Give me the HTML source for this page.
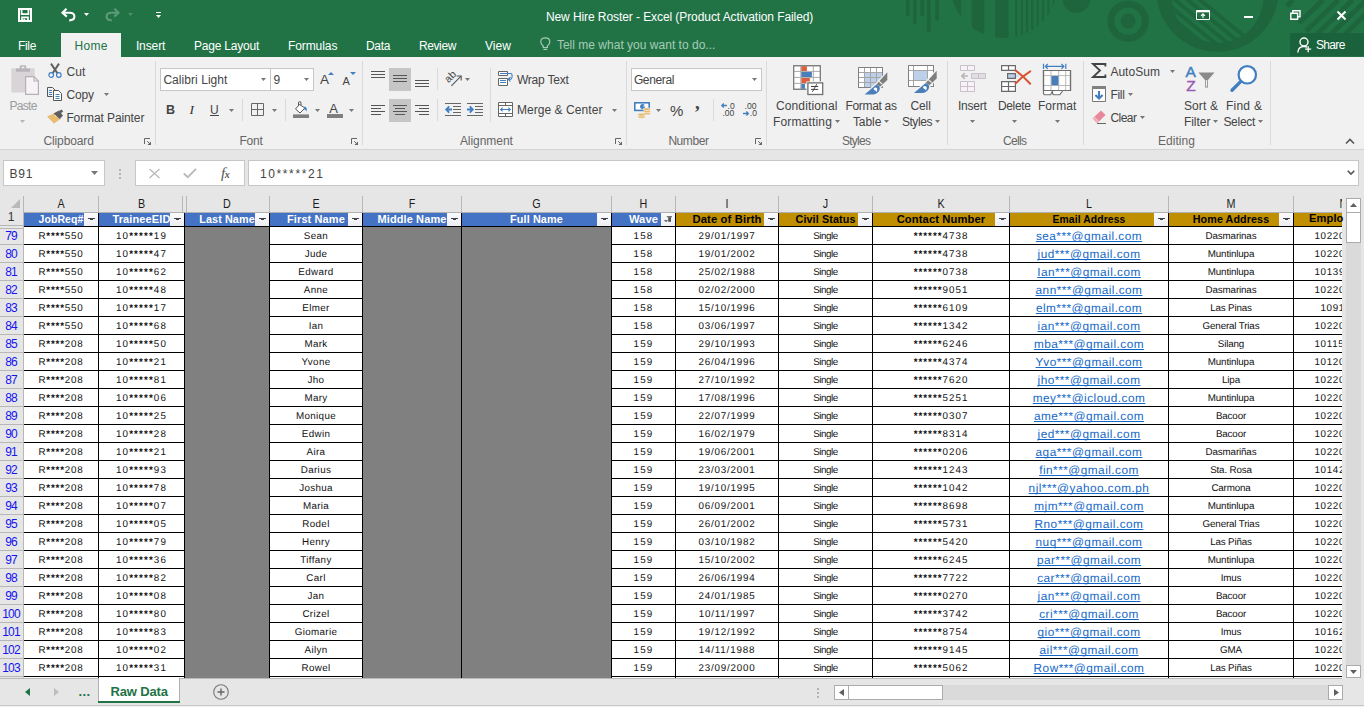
<!DOCTYPE html>
<html lang="en"><head><meta charset="utf-8"><title>New Hire Roster - Excel</title>
<style>
html,body{margin:0;padding:0}
body{width:1364px;height:707px;overflow:hidden;position:relative;background:#e6e6e6;font-family:"Liberation Sans",sans-serif;font-size:12px;color:#444}
.a{position:absolute;display:block}
.t{position:absolute;white-space:nowrap}
svg{overflow:visible}
</style></head><body>

<div class="a" style="left:0px;top:0px;width:1364px;height:57px;background:#217346;"></div>
<svg class="a" style="left:0;top:0;overflow:hidden" width="1364" height="57" viewBox="0 0 1364 57"><rect x="906" y="0" width="3.5" height="16" fill="#1e653d"/><rect x="913" y="0" width="3.7" height="23.6" fill="#1e653d"/><rect x="920.4" y="0" width="3.5" height="16" fill="#1e653d"/><rect x="927" y="0" width="3.6" height="32.4" fill="#1e653d"/><rect x="935.2" y="0" width="3.7" height="20.5" fill="#1e653d"/><clipPath id="hd"><circle cx="1004" cy="-15.8" r="53.8"/></clipPath><g clip-path="url(#hd)" fill="#1e653d"><rect x="940" y="0" width="21" height="40"/><rect x="971.7" y="0" width="12.7" height="40"/><rect x="995.1" y="0" width="13.4" height="40"/><rect x="1015.2" y="0" width="2.2" height="40"/><rect x="1020.8" y="0" width="2.2" height="40"/><rect x="1025.9" y="0" width="2.2" height="40"/><rect x="1031.2" y="0" width="2.2" height="40"/><rect x="1036.6" y="0" width="2.2" height="40"/><rect x="1041.9" y="0" width="2.2" height="40"/><rect x="1047.3" y="0" width="2.2" height="40"/><rect x="1052.6" y="0" width="2.2" height="40"/></g><circle cx="1076.4" cy="-1" r="13.7" fill="#1e653d"/><circle cx="1128.1" cy="21.1" r="17.2" fill="none" stroke="#1e653d" stroke-width="7"/><circle cx="1128.1" cy="21.1" r="7.5" fill="#1e653d"/><circle cx="1217.5" cy="-9.3" r="61.1" fill="#1e653d"/><circle cx="1217.7" cy="-2.9" r="45.8" fill="#217346"/><clipPath id="br"><circle cx="1217.7" cy="-2.9" r="45.8"/></clipPath><g clip-path="url(#br)" stroke="#1e653d" stroke-width="3.8"><path d="M1138.0 -10L1211.0 50"/><path d="M1150.5 -10L1223.5 50"/><path d="M1163.0 -10L1236.0 50"/><path d="M1175.5 -10L1248.5 50"/><path d="M1188.0 -10L1261.0 50"/></g><clipPath id="tr"><rect x="1284" y="0" width="80" height="33"/></clipPath><g clip-path="url(#tr)" stroke="#1e653d" stroke-width="4.8"><path d="M1293 0L1286.76 6"/><path d="M1323 0L1299.08 23"/><path d="M1338.4 0L1306.16 31"/><path d="M1352.5 0L1315.06 36"/><path d="M1366.5 0L1329.06 36"/><path d="M1380.5 0L1343.06 36"/></g></svg>
<svg class="a" style="left:18px;top:8px;" width="14" height="14" viewBox="0 0 14 14"><path d="M1 1H13V13H1Z" fill="none" stroke="#fff" stroke-width="2"/><path d="M3.6 1V6.2H10.4V1" fill="none" stroke="#fff" stroke-width="1.7"/><path d="M4 13V9.4H10V13" fill="none" stroke="#fff" stroke-width="1.7"/><rect x="5.4" y="10.6" width="1.8" height="2.4" fill="#fff"/></svg>
<svg class="a" style="left:61px;top:8px;" width="15" height="13" viewBox="0 0 15 13"><path d="M5.5 0.8L1.5 4.8L5.8 8.6M1.8 4.8H8.8Q13.4 4.8 13.4 8.6Q13.4 12.4 8.2 12.4" fill="none" stroke="#fff" stroke-width="2.1"/></svg>
<svg class="a" style="left:84px;top:13px;" width="5" height="3" viewBox="0 0 5 3"><path d="M0 0H5L2.5 3Z" fill="#fff"/></svg>
<svg class="a" style="left:104.5px;top:8px;" width="15" height="13" viewBox="0 0 15 13"><path d="M9.5 0.8L13.5 4.8L9.2 8.6M13.2 4.8H6.2Q1.6 4.8 1.6 8.6Q1.6 12.4 6.8 12.4" fill="none" stroke="#5c9a78" stroke-width="2.1"/></svg>
<svg class="a" style="left:128px;top:13px;" width="5" height="3" viewBox="0 0 5 3"><path d="M0 0H5L2.5 3Z" fill="#4f8f6c"/></svg>
<div class="a" style="left:156px;top:12px;width:5px;height:1px;background:#fff;"></div>
<svg class="a" style="left:156px;top:14.5px;" width="5" height="3" viewBox="0 0 5 3"><path d="M0 0H5L2.5 3Z" fill="#fff"/></svg>
<div class="t" style="left:545.9px;top:8.84px;font-size:12px;line-height:16px;color:#fff;letter-spacing:-0.079px;">New Hire Roster - Excel (Product Activation Failed)</div>
<div class="a" style="left:61px;top:33px;width:60px;height:24px;background:#f1f1f1;"></div>
<div class="t" style="left:17.9px;top:37.84px;font-size:12px;line-height:16px;color:#fff;letter-spacing:-0.279px;">File</div>
<div class="t" style="left:74.4px;top:37.84px;font-size:12px;line-height:16px;color:#217346;letter-spacing:0.33px;">Home</div>
<div class="t" style="left:135.9px;top:37.84px;font-size:12px;line-height:16px;color:#fff;letter-spacing:-0.102px;">Insert</div>
<div class="t" style="left:193.9px;top:37.84px;font-size:12px;line-height:16px;color:#fff;letter-spacing:-0.189px;">Page Layout</div>
<div class="t" style="left:287.9px;top:37.84px;font-size:12px;line-height:16px;color:#fff;letter-spacing:-0.073px;">Formulas</div>
<div class="t" style="left:365.9px;top:37.84px;font-size:12px;line-height:16px;color:#fff;letter-spacing:-0.283px;">Data</div>
<div class="t" style="left:418.9px;top:37.84px;font-size:12px;line-height:16px;color:#fff;letter-spacing:-0.369px;">Review</div>
<div class="t" style="left:484.9px;top:37.84px;font-size:12px;line-height:16px;color:#fff;letter-spacing:0.069px;">View</div>
<svg class="a" style="left:540px;top:37px;" width="11" height="14" viewBox="0 0 11 14"><path d="M3.2 10.5V9Q0.8 7.2 0.8 4.8Q0.8 0.8 5.3 0.8Q9.8 0.8 9.8 4.8Q9.8 7.2 7.4 9V10.5ZM3.4 12.3H7.2" fill="none" stroke="#a8cbb7" stroke-width="1.2"/></svg>
<div class="t" style="left:556.9px;top:36.84px;font-size:12px;line-height:16px;color:#a8cbb7;letter-spacing:0.014px;">Tell me what you want to do...</div>
<svg class="a" style="left:1196px;top:10px;" width="14" height="10" viewBox="0 0 14 10"><path d="M0.5 0.5H13.5V9.5H0.5Z" fill="none" stroke="#fff"/><path d="M0 1.5H14" stroke="#fff" stroke-width="1.6"/><path d="M7 8V4M5 5.8L7 3.8L9 5.8" fill="none" stroke="#fff" stroke-width="1.1"/></svg>
<div class="a" style="left:1244px;top:16px;width:9px;height:2px;background:#fff;"></div>
<svg class="a" style="left:1290px;top:10px;" width="11" height="10" viewBox="0 0 11 10"><path d="M0.8 3.2H7.6V9.2H0.8Z" fill="none" stroke="#fff" stroke-width="1.4"/><path d="M2.8 3V0.8H10V6.8H7.8" fill="none" stroke="#fff" stroke-width="1.4"/></svg>
<svg class="a" style="left:1336.5px;top:10.5px;" width="9" height="9" viewBox="0 0 9 9"><path d="M0.5 0.5L8.5 8.5M8.5 0.5L0.5 8.5" stroke="#fff" stroke-width="2"/></svg>
<div class="a" style="left:1290px;top:33px;width:74px;height:23px;background:#1a623b;"></div>
<svg class="a" style="left:1297px;top:37px;" width="16" height="16" viewBox="0 0 16 16"><circle cx="7" cy="5" r="4" fill="none" stroke="#fff" stroke-width="1.4"/><path d="M0.8 15.5Q1.2 9.5 7 9.5Q9 9.5 10.2 10.2" fill="none" stroke="#fff" stroke-width="1.4"/><path d="M11.2 9.2V15.2M8.2 12.2H14.2" stroke="#fff" stroke-width="1.3"/></svg>
<div class="t" style="left:1315.9px;top:36.84px;font-size:12px;line-height:16px;color:#fff;letter-spacing:-0.63px;">Share</div>
<div class="a" style="left:0px;top:57px;width:1364px;height:92px;background:#f1f1f1;"></div>
<div class="a" style="left:0px;top:149px;width:1364px;height:1px;background:#d4d4d4;"></div>
<div class="a" style="left:155px;top:61px;width:1px;height:84px;background:#dadada;"></div>
<div class="a" style="left:362px;top:61px;width:1px;height:84px;background:#dadada;"></div>
<div class="a" style="left:626px;top:61px;width:1px;height:84px;background:#dadada;"></div>
<div class="a" style="left:766px;top:61px;width:1px;height:84px;background:#dadada;"></div>
<div class="a" style="left:947px;top:61px;width:1px;height:84px;background:#dadada;"></div>
<div class="a" style="left:1083px;top:61px;width:1px;height:84px;background:#dadada;"></div>
<div class="a" style="left:1270px;top:61px;width:1px;height:84px;background:#dadada;"></div>
<svg class="a" style="left:144px;top:138px;" width="8" height="8" viewBox="0 0 8 8"><path d="M0.5 6V0.5H6" fill="none" stroke="#666" stroke-width="1"/><path d="M3.2 3.2L5.5 5.5" fill="none" stroke="#666" stroke-width="1"/><path d="M7 3.4V7H3.4Z" fill="#666"/></svg>
<svg class="a" style="left:351px;top:138px;" width="8" height="8" viewBox="0 0 8 8"><path d="M0.5 6V0.5H6" fill="none" stroke="#666" stroke-width="1"/><path d="M3.2 3.2L5.5 5.5" fill="none" stroke="#666" stroke-width="1"/><path d="M7 3.4V7H3.4Z" fill="#666"/></svg>
<svg class="a" style="left:615px;top:138px;" width="8" height="8" viewBox="0 0 8 8"><path d="M0.5 6V0.5H6" fill="none" stroke="#666" stroke-width="1"/><path d="M3.2 3.2L5.5 5.5" fill="none" stroke="#666" stroke-width="1"/><path d="M7 3.4V7H3.4Z" fill="#666"/></svg>
<svg class="a" style="left:755px;top:138px;" width="8" height="8" viewBox="0 0 8 8"><path d="M0.5 6V0.5H6" fill="none" stroke="#666" stroke-width="1"/><path d="M3.2 3.2L5.5 5.5" fill="none" stroke="#666" stroke-width="1"/><path d="M7 3.4V7H3.4Z" fill="#666"/></svg>
<div class="t" style="left:43.4px;top:132.84px;font-size:12px;line-height:16px;color:#666;letter-spacing:-0.108px;">Clipboard</div>
<div class="t" style="left:239.4px;top:132.84px;font-size:12px;line-height:16px;color:#666;letter-spacing:-0.171px;">Font</div>
<div class="t" style="left:459.9px;top:132.84px;font-size:12px;line-height:16px;color:#666;letter-spacing:-0.045px;">Alignment</div>
<div class="t" style="left:668.4px;top:132.84px;font-size:12px;line-height:16px;color:#666;letter-spacing:-0.436px;">Number</div>
<div class="t" style="left:841.9px;top:132.84px;font-size:12px;line-height:16px;color:#666;letter-spacing:-0.736px;">Styles</div>
<div class="t" style="left:1002.9px;top:132.84px;font-size:12px;line-height:16px;color:#666;letter-spacing:-0.668px;">Cells</div>
<div class="t" style="left:1157.9px;top:132.84px;font-size:12px;line-height:16px;color:#666;letter-spacing:0.051px;">Editing</div>
<svg class="a" style="left:1345px;top:138px;" width="10" height="6" viewBox="0 0 10 6"><path d="M1 5.5L5 1.5L9 5.5" fill="none" stroke="#555" stroke-width="1.6"/></svg>
<svg class="a" style="left:11px;top:65px;" width="28" height="30" viewBox="0 0 28 30"><rect x="0.3" y="3.3" width="23.4" height="24.2" rx="1.2" fill="#d8d4d8"/>
<path d="M5 3.4H8.8V1.6Q8.8 0.3 10 0.3H14Q15.2 0.3 15.2 1.6V3.4H19V6.8H5Z" fill="#b9b4b9"/>
<rect x="10.6" y="1.6" width="2.8" height="1.7" fill="#efedef"/>
<path d="M14.6 11.6H23L27.4 16V29.4H14.6Z" fill="#f6f2f6" stroke="#b5b0b5" stroke-width="1.2"/><path d="M23 11.6V16H27.4" fill="none" stroke="#b5b0b5" stroke-width="1.1"/></svg>
<div class="t" style="left:9.4px;top:97.84px;font-size:12px;line-height:16px;color:#9b9b9b;letter-spacing:-0.671px;">Paste</div>
<svg class="a" style="left:20px;top:120px;" width="5" height="3" viewBox="0 0 5 3"><path d="M0 0H5L2.5 3Z" fill="#b5b5b5"/></svg>
<svg class="a" style="left:48px;top:63px;" width="14" height="15" viewBox="0 0 14 15"><path d="M3 0.6L9.4 10.2M11 0.6L4.6 10.2" stroke="#606060" stroke-width="2" fill="none"/>
<circle cx="3.2" cy="12" r="2.3" fill="none" stroke="#417fc1" stroke-width="1.2"/><circle cx="10.8" cy="12" r="2.3" fill="none" stroke="#417fc1" stroke-width="1.2"/></svg>
<div class="t" style="left:66.4px;top:63.84px;font-size:12px;line-height:16px;color:#444;letter-spacing:0.163px;">Cut</div>
<svg class="a" style="left:47px;top:87px;" width="15" height="14" viewBox="0 0 15 14"><path d="M0.5 0.5H5.5L8 3V3.5M0.5 0.5V9.5H5.5" fill="none" stroke="#555"/>
<path d="M6.5 3.5H11.5L14.5 6.5V13.5H6.5Z" fill="#fff" stroke="#555"/>
<path d="M2 3.5H5M2 5.5H5M2 7.5H5M8.5 7.5H12.5M8.5 9.5H12.5M8.5 11.5H12.5" stroke="#417fc1"/></svg>
<div class="t" style="left:66.4px;top:86.84px;font-size:12px;line-height:16px;color:#444;letter-spacing:-0.171px;">Copy</div>
<svg class="a" style="left:104px;top:93px;" width="5" height="3" viewBox="0 0 5 3"><path d="M0 0H5L2.5 3Z" fill="#777"/></svg>
<svg class="a" style="left:47px;top:109px;" width="17" height="15" viewBox="0 0 17 15"><path d="M0.1 7.4L8 4L13.4 9.9L7 14.4Z" fill="#e8bb6e"/>
<path d="M6.5 4.5L12 1.5L15.9 6.4L12.9 9.9Z" fill="#5e5e5e"/><path d="M7.6 5.8L9.4 8" stroke="#f1f1f1" stroke-width="0.8"/><path d="M12 2L14.6 0.4L16.2 2.4L13.4 4.4Z" fill="#5e5e5e"/></svg>
<div class="t" style="left:66.4px;top:109.84px;font-size:12px;line-height:16px;color:#444;letter-spacing:-0.105px;">Format Painter</div>
<div class="a" style="left:160px;top:68px;width:154px;height:23px;background:#fff;box-sizing:border-box;border:1px solid #c6c6c6;"></div>
<div class="a" style="left:270px;top:69px;width:1px;height:21px;background:#c6c6c6;"></div>
<div class="t" style="left:163.4px;top:71.84px;font-size:12px;line-height:16px;color:#444;letter-spacing:0.053px;">Calibri Light</div>
<svg class="a" style="left:261px;top:78px;" width="5" height="3" viewBox="0 0 5 3"><path d="M0 0H5L2.5 3Z" fill="#777"/></svg>
<div class="t" style="left:273.4px;top:71.84px;font-size:12px;line-height:16px;color:#444;">9</div>
<svg class="a" style="left:304px;top:78px;" width="5" height="3" viewBox="0 0 5 3"><path d="M0 0H5L2.5 3Z" fill="#777"/></svg>
<div class="t" style="left:320px;top:70.32px;font-size:13.5px;line-height:20px;color:#444;">A</div>
<svg class="a" style="left:328px;top:72px;" width="6" height="3" viewBox="0 0 6 3"><path d="M0 3H6L3 0Z" fill="#417fc1"/></svg>
<div class="t" style="left:342.6px;top:73.19px;font-size:11px;line-height:16px;color:#444;">A</div>
<svg class="a" style="left:349.5px;top:72px;" width="6" height="3" viewBox="0 0 6 3"><path d="M0 0H6L3 3Z" fill="#417fc1"/></svg>
<div class="t" style="left:166px;top:101.67px;font-size:12.5px;line-height:16px;color:#444;font-weight:bold;">B</div>
<div class="t" style="left:189.5px;top:100px;font-family:'Liberation Serif',serif;font-style:italic;font-size:13.5px;line-height:20px;color:#333">I</div>
<div class="t" style="left:210px;top:102.04px;font-size:12px;line-height:16px;color:#444;">U</div>
<div class="a" style="left:210px;top:115px;width:9px;height:1px;background:#444;"></div>
<svg class="a" style="left:229px;top:109px;" width="5" height="3" viewBox="0 0 5 3"><path d="M0 0H5L2.5 3Z" fill="#777"/></svg>
<div class="a" style="left:242px;top:99px;width:1px;height:22px;background:#dadada;"></div>
<svg class="a" style="left:251px;top:103px;" width="13" height="13" viewBox="0 0 13 13"><path d="M0.5 0.5H12.5V12.5H0.5ZM6.5 0.5V12.5M0.5 6.5H12.5" fill="none" stroke="#666"/></svg>
<svg class="a" style="left:272px;top:109px;" width="5" height="3" viewBox="0 0 5 3"><path d="M0 0H5L2.5 3Z" fill="#777"/></svg>
<div class="a" style="left:285px;top:99px;width:1px;height:22px;background:#dadada;"></div>
<svg class="a" style="left:293px;top:101px;" width="17" height="17" viewBox="0 0 17 17"><rect x="0" y="13.4" width="16" height="3.6" fill="#7f7f7f"/>
<path d="M6.5 3.5L2.5 8L7 12L12 7Z" fill="#fff" stroke="#555" stroke-width="1"/>
<path d="M5.5 5V2Q5.5 0.6 6.8 0.6Q8 0.6 8 2V4" fill="none" stroke="#555"/>
<path d="M11.5 5.5Q14.5 6 13.6 10.6Q12 8 10.4 8.4Z" fill="#417fc1"/></svg>
<svg class="a" style="left:315px;top:109px;" width="5" height="3" viewBox="0 0 5 3"><path d="M0 0H5L2.5 3Z" fill="#777"/></svg>
<div class="t" style="left:329.3px;top:100.80px;font-size:13px;line-height:16px;color:#444;">A</div>
<div class="a" style="left:327px;top:114.4px;width:16px;height:3.6px;background:#7f7f7f;"></div>
<svg class="a" style="left:349px;top:109px;" width="5" height="3" viewBox="0 0 5 3"><path d="M0 0H5L2.5 3Z" fill="#777"/></svg>
<div class="a" style="left:371px;top:71px;width:14px;height:1px;background:#555;"></div>
<div class="a" style="left:371px;top:74px;width:14px;height:1px;background:#555;"></div>
<div class="a" style="left:371px;top:77px;width:14px;height:1px;background:#555;"></div>
<div class="a" style="left:389px;top:68px;width:22px;height:23px;background:#c6c6c6;"></div>
<div class="a" style="left:393px;top:75px;width:14px;height:1px;background:#555;"></div>
<div class="a" style="left:393px;top:78px;width:14px;height:1px;background:#555;"></div>
<div class="a" style="left:393px;top:81px;width:14px;height:1px;background:#555;"></div>
<div class="a" style="left:415px;top:80px;width:14px;height:1px;background:#555;"></div>
<div class="a" style="left:415px;top:83px;width:14px;height:1px;background:#555;"></div>
<div class="a" style="left:415px;top:86px;width:14px;height:1px;background:#555;"></div>
<div class="a" style="left:437px;top:68px;width:1px;height:22px;background:#dadada;"></div>
<svg class="a" style="left:444px;top:70px;" width="19" height="17" viewBox="0 0 19 17"><path d="M7.4 15.8L17 6.2" stroke="#555" stroke-width="1.1" fill="none"/><path d="M12.6 6H17.2V10.6" fill="none" stroke="#555" stroke-width="1.1"/>
<text x="0" y="0" font-size="10.5" fill="#444" font-family="Liberation Sans, sans-serif" transform="translate(4.6 13.2) rotate(-45)">ab</text></svg>
<svg class="a" style="left:465px;top:78px;" width="5" height="3" viewBox="0 0 5 3"><path d="M0 0H5L2.5 3Z" fill="#777"/></svg>
<div class="a" style="left:490px;top:68px;width:1px;height:54px;background:#dadada;"></div>
<svg class="a" style="left:498px;top:71px;" width="16" height="16" viewBox="0 0 16 16"><path d="M0.5 0.5H9.5V4.5H0.5ZM0.5 7.5H9.5V14.5H0.5Z" fill="#fff" stroke="#666"/>
<path d="M2 2.5H13.5M2 9.5H8M2 11.5H8" stroke="#417fc1" fill="none"/><path d="M13.5 2.5Q15 6 13 8.2H10.5M12.4 6.2L10.2 8.3L12.4 10.4" fill="none" stroke="#417fc1" stroke-width="1.1"/></svg>
<div class="t" style="left:516.9px;top:71.84px;font-size:12px;line-height:16px;color:#444;letter-spacing:-0.197px;">Wrap Text</div>
<div class="a" style="left:371px;top:105px;width:14px;height:1px;background:#555;"></div>
<div class="a" style="left:371px;top:108px;width:10px;height:1px;background:#555;"></div>
<div class="a" style="left:371px;top:111px;width:14px;height:1px;background:#555;"></div>
<div class="a" style="left:371px;top:114px;width:10px;height:1px;background:#555;"></div>
<div class="a" style="left:389px;top:99px;width:22px;height:23px;background:#c6c6c6;"></div>
<div class="a" style="left:393px;top:105px;width:14px;height:1px;background:#555;"></div>
<div class="a" style="left:395px;top:108px;width:10px;height:1px;background:#555;"></div>
<div class="a" style="left:393px;top:111px;width:14px;height:1px;background:#555;"></div>
<div class="a" style="left:395px;top:114px;width:10px;height:1px;background:#555;"></div>
<div class="a" style="left:415px;top:105px;width:14px;height:1px;background:#555;"></div>
<div class="a" style="left:419px;top:108px;width:10px;height:1px;background:#555;"></div>
<div class="a" style="left:415px;top:111px;width:14px;height:1px;background:#555;"></div>
<div class="a" style="left:419px;top:114px;width:10px;height:1px;background:#555;"></div>
<div class="a" style="left:437px;top:99px;width:1px;height:22px;background:#dadada;"></div>
<svg class="a" style="left:445px;top:103px;" width="16" height="13" viewBox="0 0 16 13"><path d="M0 0.5H16M8 3.5H16M8 6.5H16M8 9.5H16M0 12.5H16" stroke="#666"/>
<path d="M7 6.5H1.4M4.2 3.4L1.2 6.5L4.2 9.6" fill="none" stroke="#417fc1" stroke-width="1.8"/></svg>
<svg class="a" style="left:467px;top:103px;" width="16" height="13" viewBox="0 0 16 13"><path d="M0 0.5H16M8 3.5H16M8 6.5H16M8 9.5H16M0 12.5H16" stroke="#666"/>
<path d="M0 6.5H5.6M2.8 3.4L5.8 6.5L2.8 9.6" fill="none" stroke="#417fc1" stroke-width="1.8"/></svg>
<svg class="a" style="left:498px;top:102px;" width="15" height="15" viewBox="0 0 15 15"><path d="M0.5 0.5H14.5V14.5H0.5Z" fill="#fff" stroke="#666" stroke-width="1"/><path d="M0.5 3.5H14.5M0.5 11.5H14.5M7.5 0.5V3.5M7.5 11.5V14.5" fill="none" stroke="#666" stroke-width="1"/>
<path d="M3 7.5H12M4.6 5.6L2.7 7.5L4.6 9.4M10.4 5.6L12.3 7.5L10.4 9.4" fill="none" stroke="#417fc1" stroke-width="1.1"/></svg>
<div class="t" style="left:516.9px;top:102.34px;font-size:12px;line-height:16px;color:#444;letter-spacing:0.061px;">Merge &amp; Center</div>
<svg class="a" style="left:612px;top:109px;" width="5" height="3" viewBox="0 0 5 3"><path d="M0 0H5L2.5 3Z" fill="#777"/></svg>
<div class="a" style="left:631px;top:68px;width:131px;height:23px;background:#fff;box-sizing:border-box;border:1px solid #c6c6c6;"></div>
<div class="t" style="left:633.9px;top:71.84px;font-size:12px;line-height:16px;color:#444;letter-spacing:-0.365px;">General</div>
<svg class="a" style="left:752px;top:78px;" width="5" height="3" viewBox="0 0 5 3"><path d="M0 0H5L2.5 3Z" fill="#777"/></svg>
<svg class="a" style="left:634px;top:102px;" width="17" height="17" viewBox="0 0 17 17"><rect x="0" y="0" width="16" height="9.2" fill="#417fc1"/><rect x="1.6" y="1.6" width="12.8" height="6" fill="#fff"/>
<circle cx="8.6" cy="4.6" r="2.5" fill="#417fc1"/><path d="M8.6 4.6H11.2V2.8Z" fill="#fff"/>
<g fill="#e8b868" stroke="#f1f1f1" stroke-width="0.7"><ellipse cx="12.9" cy="11.4" rx="3.5" ry="1.5"/><ellipse cx="12.9" cy="9.3" rx="3.5" ry="1.5"/><ellipse cx="12.9" cy="7.2" rx="3.5" ry="1.5"/>
<ellipse cx="7.6" cy="14.8" rx="3.7" ry="1.5"/><ellipse cx="7.6" cy="12.6" rx="3.7" ry="1.5"/></g></svg>
<svg class="a" style="left:656px;top:109px;" width="5" height="3" viewBox="0 0 5 3"><path d="M0 0H5L2.5 3Z" fill="#777"/></svg>
<div class="t" style="left:670px;top:100.80px;font-size:15px;line-height:20px;color:#444;">%</div>
<div class="t" style="left:695.1px;top:92.62px;font-size:19px;line-height:20px;color:#444;font-weight:bold;font-family:'Liberation Serif',serif;">,</div>
<div class="a" style="left:713px;top:99px;width:1px;height:22px;background:#dadada;"></div>
<svg class="a" style="left:721px;top:103px;" width="15" height="14" viewBox="0 0 15 14"><path d="M6 2.5H0.8M2.8 0.5L0.8 2.5L2.8 4.5" fill="none" stroke="#417fc1" stroke-width="1.3"/>
<text x="6.6" y="6.2" font-size="8.6" fill="#444" font-family="Liberation Sans, sans-serif">.0</text>
<text x="1.4" y="13.4" font-size="8.6" fill="#444" font-family="Liberation Sans, sans-serif">.00</text></svg>
<svg class="a" style="left:743px;top:103px;" width="15" height="14" viewBox="0 0 15 14"><text x="1.6" y="6.2" font-size="8.6" fill="#444" font-family="Liberation Sans, sans-serif">.00</text>
<path d="M0 10.5H5.4M3.4 8.5L5.4 10.5L3.4 12.5" fill="none" stroke="#417fc1" stroke-width="1.3"/>
<text x="6.8" y="13.4" font-size="8.6" fill="#444" font-family="Liberation Sans, sans-serif">.0</text></svg>
<svg class="a" style="left:793px;top:65px;" width="31" height="31" viewBox="0 0 31 31"><path d="M0.6 0.6H27.4V24.4H0.6Z" fill="#fff" stroke="#808080" stroke-width="1.2"/>
<path d="M7.8 0.5V24.5M20.3 0.5V24.5M0.5 6.4H27.5M0.5 12.4H27.5M0.5 18.4H27.5" stroke="#a9a9a9" fill="none"/>
<rect x="8.3" y="1.2" width="5.6" height="4.8" fill="#dc5f3f"/><rect x="8.3" y="7" width="10.6" height="5" fill="#4a7ebb"/><rect x="8.3" y="13" width="8.6" height="5" fill="#dc5f3f"/><rect x="8.3" y="19" width="3.6" height="4.8" fill="#4a7ebb"/>
<path d="M0.6 0.6H27.4V24.4H0.6Z" fill="none" stroke="#808080" stroke-width="1.2"/>
<rect x="13.4" y="16.4" width="18" height="15" fill="#f1f1f1"/>
<rect x="14.9" y="17.9" width="14.8" height="11.6" fill="#fff" stroke="#707070" stroke-width="1.3"/>
<path d="M18 21.5H25.2M18 24.4H25.2M23.8 19.2L19.4 26.8" stroke="#444" stroke-width="1" fill="none"/></svg>
<div class="t" style="left:775.9px;top:97.84px;font-size:12px;line-height:16px;color:#444;letter-spacing:0.146px;">Conditional</div>
<div class="t" style="left:772.9px;top:113.84px;font-size:12px;line-height:16px;color:#444;letter-spacing:0.183px;">Formatting</div>
<svg class="a" style="left:835px;top:120px;" width="5" height="3" viewBox="0 0 5 3"><path d="M0 0H5L2.5 3Z" fill="#777"/></svg>
<svg class="a" style="left:858px;top:67px;" width="30" height="28" viewBox="0 0 30 28"><path d="M0.5 0.5H24.5V20.5H0.5Z" fill="#fff" stroke="#808080"/>
<rect x="6.5" y="5.5" width="18" height="15" fill="#bdd0e9"/>
<path d="M6.5 0.5V20.5M12.5 0.5V20.5M18.5 0.5V20.5M0.5 5.5H24.5M0.5 10.5H24.5M0.5 15.5H24.5" stroke="#a6a6a6" fill="none"/>
<path d="M0.5 0.5H24.5V20.5H0.5Z" fill="none" stroke="#808080"/><g transform="translate(0 0)"><path d="M29.3 5.3V13L22 19.8L18.5 17.2ZM18.4 17.4L6.6 27.5H15.5Q21.2 26.2 21.9 21.2Q21.7 19.2 20 18.4Z" fill="#f1f1f1" stroke="#f1f1f1" stroke-width="2.6" stroke-linejoin="round"/><path d="M29.3 5.3V13L22 19.8L18.5 17.2Z" fill="#7d7d7d"/><path d="M20 13.4L24.2 17" stroke="#f1f1f1" stroke-width="1.1"/>
<path d="M18.4 17.4L6.6 27.5H15.5Q21.2 26.2 21.9 21.2Q21.7 19.2 20 18.4Z" fill="#4a7ebb"/><path d="M15.5 21.4Q17.5 19.8 19.2 21.4Q19.6 23.4 18.4 25L17.6 23.4L16.6 23.6Z" fill="#fff"/></g></svg>
<div class="t" style="left:845.4px;top:97.84px;font-size:12px;line-height:16px;color:#444;letter-spacing:-0.314px;">Format as</div>
<div class="t" style="left:852.9px;top:113.84px;font-size:12px;line-height:16px;color:#444;letter-spacing:-0.047px;">Table</div>
<svg class="a" style="left:884px;top:120px;" width="5" height="3" viewBox="0 0 5 3"><path d="M0 0H5L2.5 3Z" fill="#777"/></svg>
<svg class="a" style="left:908px;top:65px;" width="30" height="30" viewBox="0 0 30 30"><path d="M0.5 0.5H25.5V21.5H0.5Z" fill="#fff" stroke="#808080"/>
<rect x="5.5" y="5.5" width="14" height="10" fill="#bdd0e9"/>
<path d="M5.5 0.5V21.5M19.5 0.5V21.5M0.5 5.5H25.5M0.5 15.5H25.5" stroke="#a6a6a6" fill="none"/>
<path d="M0.5 0.5H25.5V21.5H0.5Z" fill="none" stroke="#808080"/><g transform="translate(-0.6 0.5)"><path d="M29.3 5.3V13L22 19.8L18.5 17.2ZM18.4 17.4L6.6 27.5H15.5Q21.2 26.2 21.9 21.2Q21.7 19.2 20 18.4Z" fill="#f1f1f1" stroke="#f1f1f1" stroke-width="2.6" stroke-linejoin="round"/><path d="M29.3 5.3V13L22 19.8L18.5 17.2Z" fill="#7d7d7d"/><path d="M20 13.4L24.2 17" stroke="#f1f1f1" stroke-width="1.1"/>
<path d="M18.4 17.4L6.6 27.5H15.5Q21.2 26.2 21.9 21.2Q21.7 19.2 20 18.4Z" fill="#4a7ebb"/><path d="M15.5 21.4Q17.5 19.8 19.2 21.4Q19.6 23.4 18.4 25L17.6 23.4L16.6 23.6Z" fill="#fff"/></g></svg>
<div class="t" style="left:910.4px;top:97.84px;font-size:12px;line-height:16px;color:#444;letter-spacing:-0.057px;">Cell</div>
<div class="t" style="left:901.9px;top:113.84px;font-size:12px;line-height:16px;color:#444;letter-spacing:-0.436px;">Styles</div>
<svg class="a" style="left:934.5px;top:120px;" width="5" height="3" viewBox="0 0 5 3"><path d="M0 0H5L2.5 3Z" fill="#777"/></svg>
<svg class="a" style="left:960px;top:65px;" width="27" height="27" viewBox="0 0 27 27"><path d="M0.5 0.5H14.5V5.5H0.5ZM7.5 0.5V5.5" fill="#f8f2f8" stroke="#c9c1c9"/>
<path d="M11.5 8.5H25.5V13.5H11.5ZM18.5 8.5V13.5" fill="#e2dde2" stroke="#c9c1c9"/>
<path d="M0.5 16.5H14.5V26.5H0.5ZM7.5 16.5V26.5M0.5 21.5H14.5" fill="#f8f2f8" stroke="#c9c1c9"/>
<path d="M8 11H2M4.8 8.2L1.8 11L4.8 13.8" fill="none" stroke="#b9b5b9" stroke-width="1.6"/></svg>
<div class="t" style="left:957.9px;top:97.84px;font-size:12px;line-height:16px;color:#444;letter-spacing:-0.202px;">Insert</div>
<svg class="a" style="left:970px;top:120px;" width="5" height="3" viewBox="0 0 5 3"><path d="M0 0H5L2.5 3Z" fill="#777"/></svg>
<svg class="a" style="left:1001px;top:65px;" width="31" height="27" viewBox="0 0 31 27"><path d="M0.6 0.6H14.4V5.4H0.6ZM7.5 0.5V5.5" fill="#fff" stroke="#6a6a6a" stroke-width="1.2"/>
<path d="M14 8.5L18.5 11L14 13.5Z" fill="#cfe0f3"/><path d="M6.6 8.6H14.4V13.4H6.6Z" fill="#bdd0e9" stroke="#6a6a6a" stroke-width="1.2"/>
<path d="M0.6 16.6H14.4V26.4H0.6ZM7.5 16.5V26.5M0.5 21.5H14.5" fill="#fff" stroke="#6a6a6a" stroke-width="1.2"/>
<path d="M14.8 5.6Q22 11 29.2 18.8M29.2 6.4Q21 11.5 14.8 18.4" stroke="#d65532" stroke-width="2" fill="none" stroke-linecap="round"/></svg>
<div class="t" style="left:997.9px;top:97.84px;font-size:12px;line-height:16px;color:#444;letter-spacing:-0.338px;">Delete</div>
<svg class="a" style="left:1012px;top:120px;" width="5" height="3" viewBox="0 0 5 3"><path d="M0 0H5L2.5 3Z" fill="#777"/></svg>
<svg class="a" style="left:1042px;top:63px;" width="31" height="33" viewBox="0 0 31 33"><path d="M1.5 0.8V6M23.8 0.8V6" stroke="#417fc1" stroke-width="1.2" fill="none"/><path d="M3.4 3.4H21.8M5.8 1L3.3 3.4L5.8 5.8M19.4 1L21.9 3.4L19.4 5.8" fill="none" stroke="#417fc1" stroke-width="1.2"/>
<path d="M1.5 27.7V30.5Q1.8 31.7 3 31.7H8.6L10.4 28.2M10.6 28V30.5Q10.9 31.7 12.1 31.7H17.8L20.6 28" fill="#fff" stroke="#707070" stroke-width="1.1"/>
<path d="M1.5 7.5H28.5V27.5H1.5Z" fill="#fff" stroke="#707070" stroke-width="1.2"/>
<path d="M9 7.5V27.5M16.7 7.5V27.5M23.7 7.5V27.5M1.5 12.6H28.5M1.5 22.5H28.5" stroke="#b9b9b9" fill="none"/>
<rect x="9.4" y="13" width="7" height="9.2" fill="#4a7ebb"/>
<path d="M1.5 7.5H28.5V27.5H1.5Z" fill="none" stroke="#707070" stroke-width="1.2"/></svg>
<div class="t" style="left:1037.9px;top:97.84px;font-size:12px;line-height:16px;color:#444;letter-spacing:0.099px;">Format</div>
<svg class="a" style="left:1055px;top:120px;" width="5" height="3" viewBox="0 0 5 3"><path d="M0 0H5L2.5 3Z" fill="#777"/></svg>
<svg class="a" style="left:1091.8px;top:63px;" width="15" height="15" viewBox="0 0 15 15"><path d="M13.4 3.5V1H1L8 7.5L1 14H13.4V11.5" fill="none" stroke="#444" stroke-width="1.8" stroke-linejoin="miter"/></svg>
<div class="t" style="left:1110.4px;top:64.34px;font-size:12px;line-height:16px;color:#444;letter-spacing:0.023px;">AutoSum</div>
<svg class="a" style="left:1170px;top:70px;" width="5" height="3" viewBox="0 0 5 3"><path d="M0 0H5L2.5 3Z" fill="#777"/></svg>
<svg class="a" style="left:1092px;top:86px;" width="14" height="16" viewBox="0 0 14 16"><path d="M0.5 2.5H13.5V15.5H0.5Z" fill="#fff" stroke="#777"/><rect x="0" y="0" width="14" height="3" fill="#808080"/>
<path d="M7 5V12.5M3.4 9L7 12.6L10.6 9" fill="none" stroke="#417fc1" stroke-width="2.1"/></svg>
<div class="t" style="left:1110.4px;top:86.84px;font-size:12px;line-height:16px;color:#444;letter-spacing:-0.276px;">Fill</div>
<svg class="a" style="left:1128px;top:93px;" width="5" height="3" viewBox="0 0 5 3"><path d="M0 0H5L2.5 3Z" fill="#777"/></svg>
<svg class="a" style="left:1092px;top:110px;" width="15" height="14" viewBox="0 0 15 14"><path d="M0.8 8.2L9 0.6L13.6 5L6 12.4H4.2Z" fill="#e8879a"/><path d="M0.8 8.2L2.6 6.6L7.4 11L6 12.4H4.2Z" fill="#f0b3be"/><path d="M5 13.5H14" stroke="#666"/></svg>
<div class="t" style="left:1110.4px;top:109.84px;font-size:12px;line-height:16px;color:#444;letter-spacing:-0.544px;">Clear</div>
<svg class="a" style="left:1140px;top:116px;" width="5" height="3" viewBox="0 0 5 3"><path d="M0 0H5L2.5 3Z" fill="#777"/></svg>
<div class="t" style="left:1185.6px;top:62.13px;font-size:15.5px;line-height:20px;color:#417fc1;-webkit-text-stroke:0.45px #417fc1;">A</div>
<div class="t" style="left:1186.3px;top:76.43px;font-size:15.5px;line-height:20px;color:#9b59b6;-webkit-text-stroke:0.45px #9b59b6;">Z</div>
<svg class="a" style="left:1198px;top:72px;" width="17" height="16" viewBox="0 0 17 16"><path d="M0.5 0.5H16.5L10 8V15.5H7V8Z" fill="#8a8a8a"/><rect x="7.8" y="8" width="1.4" height="6.6" fill="#f1f1f1"/></svg>
<div class="t" style="left:1183.9px;top:97.84px;font-size:12px;line-height:16px;color:#444;letter-spacing:0.131px;">Sort &amp;</div>
<div class="t" style="left:1183.9px;top:113.84px;font-size:12px;line-height:16px;color:#444;letter-spacing:-0.033px;">Filter</div>
<svg class="a" style="left:1213px;top:120px;" width="5" height="3" viewBox="0 0 5 3"><path d="M0 0H5L2.5 3Z" fill="#777"/></svg>
<svg class="a" style="left:1230px;top:65px;" width="28" height="27" viewBox="0 0 28 27"><circle cx="17.3" cy="9.8" r="8.7" fill="#fff" stroke="#417fc1" stroke-width="2.2"/><path d="M10.6 16.6L2 25.2" stroke="#417fc1" stroke-width="3.4" stroke-linecap="round"/></svg>
<div class="t" style="left:1225.9px;top:97.84px;font-size:12px;line-height:16px;color:#444;letter-spacing:0.264px;">Find &amp;</div>
<div class="t" style="left:1223.4px;top:113.84px;font-size:12px;line-height:16px;color:#444;letter-spacing:-0.27px;">Select</div>
<svg class="a" style="left:1258px;top:120px;" width="5" height="3" viewBox="0 0 5 3"><path d="M0 0H5L2.5 3Z" fill="#777"/></svg>
<div class="a" style="left:3px;top:160px;width:102px;height:26px;background:#fff;box-sizing:border-box;border:1px solid #c6c6c6;"></div>
<div class="t" style="left:9.6px;top:166.24px;font-size:12px;line-height:16px;color:#444;letter-spacing:0.724px;">B91</div>
<svg class="a" style="left:91px;top:171px;" width="7" height="4" viewBox="0 0 7 4"><path d="M0 0H7L3.5 4Z" fill="#777"/></svg>
<div class="a" style="left:119px;top:169px;width:2px;height:2px;background:#b4b4b4;"></div>
<div class="a" style="left:119px;top:173px;width:2px;height:2px;background:#b4b4b4;"></div>
<div class="a" style="left:119px;top:177px;width:2px;height:2px;background:#b4b4b4;"></div>
<div class="a" style="left:135px;top:160px;width:110px;height:26px;background:#fff;box-sizing:border-box;border:1px solid #c6c6c6;"></div>
<svg class="a" style="left:148.5px;top:169px;" width="11" height="9" viewBox="0 0 11 9"><path d="M0.5 0L10.5 9M10.5 0L0.5 9" stroke="#b9b9b9" stroke-width="1.3" fill="none"/></svg>
<svg class="a" style="left:183px;top:168px;" width="14" height="10" viewBox="0 0 14 10"><path d="M0.8 5.5L4.8 9.2L13 0.8" stroke="#b9b9b9" stroke-width="1.8" fill="none"/></svg>
<div class="t" style="left:221px;top:163px;font-family:'Liberation Serif',serif;font-style:italic;font-size:14px;line-height:20px;color:#555;letter-spacing:-0.5px"><span style="font-size:15px">f</span><span style="font-size:10px;font-weight:bold">x</span></div>
<div class="a" style="left:248px;top:160px;width:1111px;height:26px;background:#fff;box-sizing:border-box;border:1px solid #c6c6c6;"></div>
<div class="t" style="left:260.0px;top:166.24px;font-size:12px;line-height:16px;color:#444;letter-spacing:1.607px;">10*****21</div>
<svg class="a" style="left:1347px;top:170px;" width="8" height="5" viewBox="0 0 8 5"><path d="M0.7 0.7L4 4L7.3 0.7" stroke="#555" stroke-width="1.6" fill="none"/></svg>
<div class="a" style="left:24px;top:213px;width:1318px;height:465px;background:#fff;"></div>
<div class="t" style="left:24px;top:195.67px;font-size:12.5px;line-height:16px;color:#1c1c1c;width:74px;text-align:center;transform:scaleX(0.86);">A</div>
<div class="t" style="left:99px;top:195.67px;font-size:12.5px;line-height:16px;color:#1c1c1c;width:85px;text-align:center;transform:scaleX(0.86);">B</div>
<div class="a" style="left:98px;top:196px;width:1px;height:16px;background:#b7b7b7;"></div>
<div class="t" style="left:185px;top:195.67px;font-size:12.5px;line-height:16px;color:#1c1c1c;width:84px;text-align:center;transform:scaleX(0.86);">D</div>
<div class="t" style="left:270px;top:195.67px;font-size:12.5px;line-height:16px;color:#1c1c1c;width:92px;text-align:center;transform:scaleX(0.86);">E</div>
<div class="a" style="left:269px;top:196px;width:1px;height:16px;background:#b7b7b7;"></div>
<div class="t" style="left:363px;top:195.67px;font-size:12.5px;line-height:16px;color:#1c1c1c;width:98px;text-align:center;transform:scaleX(0.86);">F</div>
<div class="a" style="left:362px;top:196px;width:1px;height:16px;background:#b7b7b7;"></div>
<div class="t" style="left:462px;top:195.67px;font-size:12.5px;line-height:16px;color:#1c1c1c;width:149px;text-align:center;transform:scaleX(0.86);">G</div>
<div class="a" style="left:461px;top:196px;width:1px;height:16px;background:#b7b7b7;"></div>
<div class="t" style="left:612px;top:195.67px;font-size:12.5px;line-height:16px;color:#1c1c1c;width:63px;text-align:center;transform:scaleX(0.86);">H</div>
<div class="a" style="left:611px;top:196px;width:1px;height:16px;background:#b7b7b7;"></div>
<div class="t" style="left:676px;top:195.67px;font-size:12.5px;line-height:16px;color:#1c1c1c;width:102px;text-align:center;transform:scaleX(0.86);">I</div>
<div class="a" style="left:675px;top:196px;width:1px;height:16px;background:#b7b7b7;"></div>
<div class="t" style="left:779px;top:195.67px;font-size:12.5px;line-height:16px;color:#1c1c1c;width:93px;text-align:center;transform:scaleX(0.86);">J</div>
<div class="a" style="left:778px;top:196px;width:1px;height:16px;background:#b7b7b7;"></div>
<div class="t" style="left:873px;top:195.67px;font-size:12.5px;line-height:16px;color:#1c1c1c;width:136px;text-align:center;transform:scaleX(0.86);">K</div>
<div class="a" style="left:872px;top:196px;width:1px;height:16px;background:#b7b7b7;"></div>
<div class="t" style="left:1010px;top:195.67px;font-size:12.5px;line-height:16px;color:#1c1c1c;width:158px;text-align:center;transform:scaleX(0.86);">L</div>
<div class="a" style="left:1009px;top:196px;width:1px;height:16px;background:#b7b7b7;"></div>
<div class="t" style="left:1169px;top:195.67px;font-size:12.5px;line-height:16px;color:#1c1c1c;width:124px;text-align:center;transform:scaleX(0.86);">M</div>
<div class="a" style="left:1168px;top:196px;width:1px;height:16px;background:#b7b7b7;"></div>
<div class="a" style="left:1294px;top:196px;width:48px;height:16px;overflow:hidden">
<div class="t" style="left:0;top:0;width:99px;text-align:center;font-size:12.5px;line-height:16px;color:#1c1c1c;transform:scaleX(0.86)">N</div></div>
<div class="a" style="left:1293px;top:196px;width:1px;height:16px;background:#b7b7b7;"></div>
<div class="a" style="left:182px;top:196px;width:1px;height:16px;background:#b7b7b7;"></div>
<div class="a" style="left:186px;top:196px;width:1px;height:16px;background:#b7b7b7;"></div>
<div class="a" style="left:24px;top:212px;width:1318px;height:1px;background:#b0b0b0;"></div>
<svg class="a" style="left:11px;top:199px;" width="9" height="9" viewBox="0 0 9 9"><path d="M9 0V9H0Z" fill="#b9b9b9"/></svg>
<div class="a" style="left:23px;top:196px;width:1px;height:482px;background:#b7b7b7;"></div>
<div class="a" style="left:24px;top:213px;width:74px;height:13px;background:#4472c4;"></div>
<div class="a" style="left:24px;top:213px;width:60px;height:13px;overflow:hidden">
<div class="t" style="left:0;top:-0.8px;width:74px;text-align:center;font-size:10.3px;line-height:16px;font-weight:bold;letter-spacing:0.1px;transform:scaleX(1.018);transform-origin:50% 50%;color:#fff">JobReq#</div></div>
<div class="a" style="left:84px;top:213px;width:14px;height:13px;background:linear-gradient(#fbfbfd,#eceef3);"></div>
<svg class="a" style="left:88px;top:218px;" width="7" height="3" viewBox="0 0 7 3"><path d="M0 0H7V1H5V2H2V1H0Z" fill="#444"/></svg>
<div class="a" style="left:99px;top:213px;width:85px;height:13px;background:#4472c4;"></div>
<div class="a" style="left:99px;top:213px;width:71px;height:13px;overflow:hidden">
<div class="t" style="left:0;top:-0.8px;width:85px;text-align:center;font-size:10.3px;line-height:16px;font-weight:bold;letter-spacing:0.1px;transform:scaleX(1.069);transform-origin:50% 50%;color:#fff">TraineeEID</div></div>
<div class="a" style="left:170px;top:213px;width:14px;height:13px;background:linear-gradient(#fbfbfd,#eceef3);"></div>
<svg class="a" style="left:174px;top:218px;" width="7" height="3" viewBox="0 0 7 3"><path d="M0 0H7V1H5V2H2V1H0Z" fill="#444"/></svg>
<div class="a" style="left:185px;top:213px;width:84px;height:13px;background:#4472c4;"></div>
<div class="a" style="left:185px;top:213px;width:70px;height:13px;overflow:hidden">
<div class="t" style="left:0;top:-0.8px;width:84px;text-align:center;font-size:10.3px;line-height:16px;font-weight:bold;letter-spacing:0.1px;transform:scaleX(1.049);transform-origin:50% 50%;color:#fff">Last Name</div></div>
<div class="a" style="left:255px;top:213px;width:14px;height:13px;background:linear-gradient(#fbfbfd,#eceef3);"></div>
<svg class="a" style="left:259px;top:218px;" width="7" height="3" viewBox="0 0 7 3"><path d="M0 0H7V1H5V2H2V1H0Z" fill="#444"/></svg>
<div class="a" style="left:270px;top:213px;width:92px;height:13px;background:#4472c4;"></div>
<div class="a" style="left:270px;top:213px;width:78px;height:13px;overflow:hidden">
<div class="t" style="left:0;top:-0.8px;width:92px;text-align:center;font-size:10.3px;line-height:16px;font-weight:bold;letter-spacing:0.1px;transform:scaleX(1.069);transform-origin:50% 50%;color:#fff">First Name</div></div>
<div class="a" style="left:348px;top:213px;width:14px;height:13px;background:linear-gradient(#fbfbfd,#eceef3);"></div>
<svg class="a" style="left:352px;top:218px;" width="7" height="3" viewBox="0 0 7 3"><path d="M0 0H7V1H5V2H2V1H0Z" fill="#444"/></svg>
<div class="a" style="left:363px;top:213px;width:98px;height:13px;background:#4472c4;"></div>
<div class="a" style="left:363px;top:213px;width:84px;height:13px;overflow:hidden">
<div class="t" style="left:0;top:-0.8px;width:98px;text-align:center;font-size:10.3px;line-height:16px;font-weight:bold;letter-spacing:0.1px;transform:scaleX(1.068);transform-origin:50% 50%;color:#fff">Middle Name</div></div>
<div class="a" style="left:447px;top:213px;width:14px;height:13px;background:linear-gradient(#fbfbfd,#eceef3);"></div>
<svg class="a" style="left:451px;top:218px;" width="7" height="3" viewBox="0 0 7 3"><path d="M0 0H7V1H5V2H2V1H0Z" fill="#444"/></svg>
<div class="a" style="left:462px;top:213px;width:149px;height:13px;background:#4472c4;"></div>
<div class="a" style="left:462px;top:213px;width:135px;height:13px;overflow:hidden">
<div class="t" style="left:0;top:-0.8px;width:149px;text-align:center;font-size:10.3px;line-height:16px;font-weight:bold;letter-spacing:0.1px;transform:scaleX(1.053);transform-origin:50% 50%;color:#fff">Full Name</div></div>
<div class="a" style="left:597px;top:213px;width:14px;height:13px;background:linear-gradient(#fbfbfd,#eceef3);"></div>
<svg class="a" style="left:601px;top:218px;" width="7" height="3" viewBox="0 0 7 3"><path d="M0 0H7V1H5V2H2V1H0Z" fill="#444"/></svg>
<div class="a" style="left:612px;top:213px;width:63px;height:13px;background:#4472c4;"></div>
<div class="a" style="left:612px;top:213px;width:49px;height:13px;overflow:hidden">
<div class="t" style="left:0;top:-0.8px;width:63px;text-align:center;font-size:10.3px;line-height:16px;font-weight:bold;letter-spacing:0.1px;transform:scaleX(1.085);transform-origin:50% 50%;color:#fff">Wave</div></div>
<div class="a" style="left:661px;top:213px;width:14px;height:13px;background:linear-gradient(#fbfbfd,#eceef3);"></div>
<svg class="a" style="left:663px;top:216px;" width="10" height="8" viewBox="0 0 10 8"><rect x="3.8" y="0.2" width="5.2" height="1.1" fill="#555"/><rect x="5.2" y="1.2" width="2.8" height="4.6" fill="#555"/><path d="M0.8 4.2H5.2L3 6.1Z" fill="#444"/></svg>
<div class="a" style="left:676px;top:213px;width:102px;height:13px;background:#bf8f00;"></div>
<div class="a" style="left:676px;top:213px;width:88px;height:13px;overflow:hidden">
<div class="t" style="left:0;top:-0.8px;width:102px;text-align:center;font-size:10.3px;line-height:16px;font-weight:bold;letter-spacing:0.1px;transform:scaleX(1.093);transform-origin:50% 50%;color:#000">Date of Birth</div></div>
<div class="a" style="left:764px;top:213px;width:14px;height:13px;background:linear-gradient(#fbfbfd,#eceef3);"></div>
<svg class="a" style="left:768px;top:218px;" width="7" height="3" viewBox="0 0 7 3"><path d="M0 0H7V1H5V2H2V1H0Z" fill="#444"/></svg>
<div class="a" style="left:779px;top:213px;width:93px;height:13px;background:#bf8f00;"></div>
<div class="a" style="left:779px;top:213px;width:79px;height:13px;overflow:hidden">
<div class="t" style="left:0;top:-0.8px;width:93px;text-align:center;font-size:10.3px;line-height:16px;font-weight:bold;letter-spacing:0.1px;transform:scaleX(1.047);transform-origin:50% 50%;color:#000">Civil Status</div></div>
<div class="a" style="left:858px;top:213px;width:14px;height:13px;background:linear-gradient(#fbfbfd,#eceef3);"></div>
<svg class="a" style="left:862px;top:218px;" width="7" height="3" viewBox="0 0 7 3"><path d="M0 0H7V1H5V2H2V1H0Z" fill="#444"/></svg>
<div class="a" style="left:873px;top:213px;width:136px;height:13px;background:#bf8f00;"></div>
<div class="a" style="left:873px;top:213px;width:122px;height:13px;overflow:hidden">
<div class="t" style="left:0;top:-0.8px;width:136px;text-align:center;font-size:10.3px;line-height:16px;font-weight:bold;letter-spacing:0.1px;transform:scaleX(1.088);transform-origin:50% 50%;color:#000">Contact Number</div></div>
<div class="a" style="left:995px;top:213px;width:14px;height:13px;background:linear-gradient(#fbfbfd,#eceef3);"></div>
<svg class="a" style="left:999px;top:218px;" width="7" height="3" viewBox="0 0 7 3"><path d="M0 0H7V1H5V2H2V1H0Z" fill="#444"/></svg>
<div class="a" style="left:1010px;top:213px;width:158px;height:13px;background:#bf8f00;"></div>
<div class="a" style="left:1010px;top:213px;width:144px;height:13px;overflow:hidden">
<div class="t" style="left:0;top:-0.8px;width:158px;text-align:center;font-size:10.3px;line-height:16px;font-weight:bold;letter-spacing:0.1px;transform:scaleX(1.007);transform-origin:50% 50%;color:#000">Email Address</div></div>
<div class="a" style="left:1154px;top:213px;width:14px;height:13px;background:linear-gradient(#fbfbfd,#eceef3);"></div>
<svg class="a" style="left:1158px;top:218px;" width="7" height="3" viewBox="0 0 7 3"><path d="M0 0H7V1H5V2H2V1H0Z" fill="#444"/></svg>
<div class="a" style="left:1169px;top:213px;width:124px;height:13px;background:#bf8f00;"></div>
<div class="a" style="left:1169px;top:213px;width:110px;height:13px;overflow:hidden">
<div class="t" style="left:0;top:-0.8px;width:124px;text-align:center;font-size:10.3px;line-height:16px;font-weight:bold;letter-spacing:0.1px;transform:scaleX(1.041);transform-origin:50% 50%;color:#000">Home Address</div></div>
<div class="a" style="left:1279px;top:213px;width:14px;height:13px;background:linear-gradient(#fbfbfd,#eceef3);"></div>
<svg class="a" style="left:1283px;top:218px;" width="7" height="3" viewBox="0 0 7 3"><path d="M0 0H7V1H5V2H2V1H0Z" fill="#444"/></svg>
<div class="a" style="left:1294px;top:213px;width:48px;height:13px;background:#bf8f00;"></div>
<div class="t" style="left:1309px;top:211.43px;font-size:10.3px;line-height:16px;color:#000;font-weight:bold;letter-spacing:0.1px;transform:scaleX(1.08);transform-origin:0 50%;">Emplo</div>
<div class="a" style="left:24px;top:226px;width:1318px;height:1px;background:#000;"></div>
<div class="a" style="left:185px;top:227px;width:84px;height:451px;background:#808080;"></div>
<div class="a" style="left:363px;top:227px;width:98px;height:451px;background:#808080;"></div>
<div class="a" style="left:462px;top:227px;width:149px;height:451px;background:#808080;"></div>
<div class="a" style="left:98px;top:213px;width:1px;height:465px;background:#000;"></div>
<div class="a" style="left:184px;top:213px;width:1px;height:465px;background:#000;"></div>
<div class="a" style="left:269px;top:213px;width:1px;height:465px;background:#000;"></div>
<div class="a" style="left:362px;top:213px;width:1px;height:465px;background:#000;"></div>
<div class="a" style="left:461px;top:213px;width:1px;height:465px;background:#000;"></div>
<div class="a" style="left:611px;top:213px;width:1px;height:465px;background:#000;"></div>
<div class="a" style="left:675px;top:213px;width:1px;height:465px;background:#000;"></div>
<div class="a" style="left:778px;top:213px;width:1px;height:465px;background:#000;"></div>
<div class="a" style="left:872px;top:213px;width:1px;height:465px;background:#000;"></div>
<div class="a" style="left:1009px;top:213px;width:1px;height:465px;background:#000;"></div>
<div class="a" style="left:1168px;top:213px;width:1px;height:465px;background:#000;"></div>
<div class="a" style="left:1293px;top:213px;width:1px;height:465px;background:#000;"></div>
<div class="t" style="left:0px;top:208.64px;font-size:12px;line-height:16px;color:#333;width:22px;text-align:center;">1</div>
<div class="a" style="left:0px;top:225px;width:23px;height:1px;background:#b7b7b7;"></div>
<div class="a" style="left:0px;top:228px;width:23px;height:1px;background:#b7b7b7;"></div>
<div class="a" style="left:24px;top:244px;width:160px;height:1px;background:#000;"></div>
<div class="a" style="left:270px;top:244px;width:92px;height:1px;background:#000;"></div>
<div class="a" style="left:612px;top:244px;width:730px;height:1px;background:#000;"></div>
<div class="a" style="left:0px;top:244px;width:23px;height:1px;background:#b7b7b7;"></div>
<div class="t" style="left:0px;top:227.84px;font-size:12px;line-height:16px;color:#1414f0;width:22px;text-align:center;letter-spacing:-0.9px;">79</div>
<div class="t" style="left:24px;top:228.90px;font-size:9.8px;line-height:16px;color:#111;width:74px;text-align:center;letter-spacing:0.82px;text-rendering:geometricPrecision;">R<b>****</b>550</div>
<div class="t" style="left:99px;top:228.90px;font-size:9.8px;line-height:16px;color:#111;width:85px;text-align:center;letter-spacing:1.13px;text-rendering:geometricPrecision;">10<b>*****</b>19</div>
<div class="t" style="left:270px;top:228.90px;font-size:9.8px;line-height:16px;color:#111;width:92px;text-align:center;letter-spacing:0.35px;text-rendering:geometricPrecision;">Sean</div>
<div class="t" style="left:612px;top:228.90px;font-size:9.8px;line-height:16px;color:#111;width:63px;text-align:center;letter-spacing:1.2px;text-rendering:geometricPrecision;">158</div>
<div class="t" style="left:676px;top:228.90px;font-size:9.8px;line-height:16px;color:#111;width:102px;text-align:center;letter-spacing:0.82px;text-rendering:geometricPrecision;">29/01/1997</div>
<div class="t" style="left:779px;top:228.90px;font-size:9.8px;line-height:16px;color:#111;width:93px;text-align:center;letter-spacing:-0.45px;text-rendering:geometricPrecision;">Single</div>
<div class="t" style="left:873px;top:228.90px;font-size:9.8px;line-height:16px;color:#111;width:136px;text-align:center;letter-spacing:1.0px;text-rendering:geometricPrecision;"><b>******</b>4738</div>
<div class="t" style="left:1010px;top:227.91px;font-size:11.8px;line-height:16px;color:#1468c8;width:158px;text-align:center;letter-spacing:0.48px;text-decoration:underline;text-decoration-skip-ink:none;text-underline-offset:1px;text-rendering:geometricPrecision;">sea***@gmail.com</div>
<div class="t" style="left:1169px;top:228.90px;font-size:9.8px;line-height:16px;color:#111;width:124px;text-align:center;letter-spacing:-0.15px;text-rendering:geometricPrecision;">Dasmarinas</div>
<div class="a" style="left:1294px;top:227px;width:48px;height:17px;overflow:hidden">
<div class="t" style="left:20.5px;top:1.90px;font-size:9.8px;line-height:16px;letter-spacing:0.67px;color:#111;text-rendering:geometricPrecision">10220</div></div>
<div class="a" style="left:24px;top:262px;width:160px;height:1px;background:#000;"></div>
<div class="a" style="left:270px;top:262px;width:92px;height:1px;background:#000;"></div>
<div class="a" style="left:612px;top:262px;width:730px;height:1px;background:#000;"></div>
<div class="a" style="left:0px;top:262px;width:23px;height:1px;background:#b7b7b7;"></div>
<div class="t" style="left:0px;top:245.84px;font-size:12px;line-height:16px;color:#1414f0;width:22px;text-align:center;letter-spacing:-0.9px;">80</div>
<div class="t" style="left:24px;top:246.90px;font-size:9.8px;line-height:16px;color:#111;width:74px;text-align:center;letter-spacing:0.82px;text-rendering:geometricPrecision;">R<b>****</b>550</div>
<div class="t" style="left:99px;top:246.90px;font-size:9.8px;line-height:16px;color:#111;width:85px;text-align:center;letter-spacing:1.13px;text-rendering:geometricPrecision;">10<b>*****</b>47</div>
<div class="t" style="left:270px;top:246.90px;font-size:9.8px;line-height:16px;color:#111;width:92px;text-align:center;letter-spacing:0.35px;text-rendering:geometricPrecision;">Jude</div>
<div class="t" style="left:612px;top:246.90px;font-size:9.8px;line-height:16px;color:#111;width:63px;text-align:center;letter-spacing:1.2px;text-rendering:geometricPrecision;">158</div>
<div class="t" style="left:676px;top:246.90px;font-size:9.8px;line-height:16px;color:#111;width:102px;text-align:center;letter-spacing:0.82px;text-rendering:geometricPrecision;">19/01/2002</div>
<div class="t" style="left:779px;top:246.90px;font-size:9.8px;line-height:16px;color:#111;width:93px;text-align:center;letter-spacing:-0.45px;text-rendering:geometricPrecision;">Single</div>
<div class="t" style="left:873px;top:246.90px;font-size:9.8px;line-height:16px;color:#111;width:136px;text-align:center;letter-spacing:1.0px;text-rendering:geometricPrecision;"><b>******</b>4738</div>
<div class="t" style="left:1010px;top:245.91px;font-size:11.8px;line-height:16px;color:#1468c8;width:158px;text-align:center;letter-spacing:0.48px;text-decoration:underline;text-decoration-skip-ink:none;text-underline-offset:1px;text-rendering:geometricPrecision;">jud***@gmail.com</div>
<div class="t" style="left:1169px;top:246.90px;font-size:9.8px;line-height:16px;color:#111;width:124px;text-align:center;letter-spacing:-0.15px;text-rendering:geometricPrecision;">Muntinlupa</div>
<div class="a" style="left:1294px;top:245px;width:48px;height:17px;overflow:hidden">
<div class="t" style="left:20.5px;top:1.90px;font-size:9.8px;line-height:16px;letter-spacing:0.67px;color:#111;text-rendering:geometricPrecision">10220</div></div>
<div class="a" style="left:24px;top:280px;width:160px;height:1px;background:#000;"></div>
<div class="a" style="left:270px;top:280px;width:92px;height:1px;background:#000;"></div>
<div class="a" style="left:612px;top:280px;width:730px;height:1px;background:#000;"></div>
<div class="a" style="left:0px;top:280px;width:23px;height:1px;background:#b7b7b7;"></div>
<div class="t" style="left:0px;top:263.84px;font-size:12px;line-height:16px;color:#1414f0;width:22px;text-align:center;letter-spacing:-0.9px;">81</div>
<div class="t" style="left:24px;top:264.90px;font-size:9.8px;line-height:16px;color:#111;width:74px;text-align:center;letter-spacing:0.82px;text-rendering:geometricPrecision;">R<b>****</b>550</div>
<div class="t" style="left:99px;top:264.90px;font-size:9.8px;line-height:16px;color:#111;width:85px;text-align:center;letter-spacing:1.13px;text-rendering:geometricPrecision;">10<b>*****</b>62</div>
<div class="t" style="left:270px;top:264.90px;font-size:9.8px;line-height:16px;color:#111;width:92px;text-align:center;letter-spacing:0.35px;text-rendering:geometricPrecision;">Edward</div>
<div class="t" style="left:612px;top:264.90px;font-size:9.8px;line-height:16px;color:#111;width:63px;text-align:center;letter-spacing:1.2px;text-rendering:geometricPrecision;">158</div>
<div class="t" style="left:676px;top:264.90px;font-size:9.8px;line-height:16px;color:#111;width:102px;text-align:center;letter-spacing:0.82px;text-rendering:geometricPrecision;">25/02/1988</div>
<div class="t" style="left:779px;top:264.90px;font-size:9.8px;line-height:16px;color:#111;width:93px;text-align:center;letter-spacing:-0.45px;text-rendering:geometricPrecision;">Single</div>
<div class="t" style="left:873px;top:264.90px;font-size:9.8px;line-height:16px;color:#111;width:136px;text-align:center;letter-spacing:1.0px;text-rendering:geometricPrecision;"><b>******</b>0738</div>
<div class="t" style="left:1010px;top:263.91px;font-size:11.8px;line-height:16px;color:#1468c8;width:158px;text-align:center;letter-spacing:0.48px;text-decoration:underline;text-decoration-skip-ink:none;text-underline-offset:1px;text-rendering:geometricPrecision;">Ian***@gmail.com</div>
<div class="t" style="left:1169px;top:264.90px;font-size:9.8px;line-height:16px;color:#111;width:124px;text-align:center;letter-spacing:-0.15px;text-rendering:geometricPrecision;">Muntinlupa</div>
<div class="a" style="left:1294px;top:263px;width:48px;height:17px;overflow:hidden">
<div class="t" style="left:20.5px;top:1.90px;font-size:9.8px;line-height:16px;letter-spacing:0.67px;color:#111;text-rendering:geometricPrecision">10139</div></div>
<div class="a" style="left:24px;top:298px;width:160px;height:1px;background:#000;"></div>
<div class="a" style="left:270px;top:298px;width:92px;height:1px;background:#000;"></div>
<div class="a" style="left:612px;top:298px;width:730px;height:1px;background:#000;"></div>
<div class="a" style="left:0px;top:298px;width:23px;height:1px;background:#b7b7b7;"></div>
<div class="t" style="left:0px;top:281.84px;font-size:12px;line-height:16px;color:#1414f0;width:22px;text-align:center;letter-spacing:-0.9px;">82</div>
<div class="t" style="left:24px;top:282.90px;font-size:9.8px;line-height:16px;color:#111;width:74px;text-align:center;letter-spacing:0.82px;text-rendering:geometricPrecision;">R<b>****</b>550</div>
<div class="t" style="left:99px;top:282.90px;font-size:9.8px;line-height:16px;color:#111;width:85px;text-align:center;letter-spacing:1.13px;text-rendering:geometricPrecision;">10<b>*****</b>48</div>
<div class="t" style="left:270px;top:282.90px;font-size:9.8px;line-height:16px;color:#111;width:92px;text-align:center;letter-spacing:0.35px;text-rendering:geometricPrecision;">Anne</div>
<div class="t" style="left:612px;top:282.90px;font-size:9.8px;line-height:16px;color:#111;width:63px;text-align:center;letter-spacing:1.2px;text-rendering:geometricPrecision;">158</div>
<div class="t" style="left:676px;top:282.90px;font-size:9.8px;line-height:16px;color:#111;width:102px;text-align:center;letter-spacing:0.82px;text-rendering:geometricPrecision;">02/02/2000</div>
<div class="t" style="left:779px;top:282.90px;font-size:9.8px;line-height:16px;color:#111;width:93px;text-align:center;letter-spacing:-0.45px;text-rendering:geometricPrecision;">Single</div>
<div class="t" style="left:873px;top:282.90px;font-size:9.8px;line-height:16px;color:#111;width:136px;text-align:center;letter-spacing:1.0px;text-rendering:geometricPrecision;"><b>******</b>9051</div>
<div class="t" style="left:1010px;top:281.91px;font-size:11.8px;line-height:16px;color:#1468c8;width:158px;text-align:center;letter-spacing:0.48px;text-decoration:underline;text-decoration-skip-ink:none;text-underline-offset:1px;text-rendering:geometricPrecision;">ann***@gmail.com</div>
<div class="t" style="left:1169px;top:282.90px;font-size:9.8px;line-height:16px;color:#111;width:124px;text-align:center;letter-spacing:-0.15px;text-rendering:geometricPrecision;">Dasmarinas</div>
<div class="a" style="left:1294px;top:281px;width:48px;height:17px;overflow:hidden">
<div class="t" style="left:20.5px;top:1.90px;font-size:9.8px;line-height:16px;letter-spacing:0.67px;color:#111;text-rendering:geometricPrecision">10220</div></div>
<div class="a" style="left:24px;top:316px;width:160px;height:1px;background:#000;"></div>
<div class="a" style="left:270px;top:316px;width:92px;height:1px;background:#000;"></div>
<div class="a" style="left:612px;top:316px;width:730px;height:1px;background:#000;"></div>
<div class="a" style="left:0px;top:316px;width:23px;height:1px;background:#b7b7b7;"></div>
<div class="t" style="left:0px;top:299.84px;font-size:12px;line-height:16px;color:#1414f0;width:22px;text-align:center;letter-spacing:-0.9px;">83</div>
<div class="t" style="left:24px;top:300.90px;font-size:9.8px;line-height:16px;color:#111;width:74px;text-align:center;letter-spacing:0.82px;text-rendering:geometricPrecision;">R<b>****</b>550</div>
<div class="t" style="left:99px;top:300.90px;font-size:9.8px;line-height:16px;color:#111;width:85px;text-align:center;letter-spacing:1.13px;text-rendering:geometricPrecision;">10<b>*****</b>17</div>
<div class="t" style="left:270px;top:300.90px;font-size:9.8px;line-height:16px;color:#111;width:92px;text-align:center;letter-spacing:0.35px;text-rendering:geometricPrecision;">Elmer</div>
<div class="t" style="left:612px;top:300.90px;font-size:9.8px;line-height:16px;color:#111;width:63px;text-align:center;letter-spacing:1.2px;text-rendering:geometricPrecision;">158</div>
<div class="t" style="left:676px;top:300.90px;font-size:9.8px;line-height:16px;color:#111;width:102px;text-align:center;letter-spacing:0.82px;text-rendering:geometricPrecision;">15/10/1996</div>
<div class="t" style="left:779px;top:300.90px;font-size:9.8px;line-height:16px;color:#111;width:93px;text-align:center;letter-spacing:-0.45px;text-rendering:geometricPrecision;">Single</div>
<div class="t" style="left:873px;top:300.90px;font-size:9.8px;line-height:16px;color:#111;width:136px;text-align:center;letter-spacing:1.0px;text-rendering:geometricPrecision;"><b>******</b>6109</div>
<div class="t" style="left:1010px;top:299.91px;font-size:11.8px;line-height:16px;color:#1468c8;width:158px;text-align:center;letter-spacing:0.48px;text-decoration:underline;text-decoration-skip-ink:none;text-underline-offset:1px;text-rendering:geometricPrecision;">elm***@gmail.com</div>
<div class="t" style="left:1169px;top:300.90px;font-size:9.8px;line-height:16px;color:#111;width:124px;text-align:center;letter-spacing:-0.15px;text-rendering:geometricPrecision;">Las Pinas</div>
<div class="a" style="left:1294px;top:299px;width:48px;height:17px;overflow:hidden">
<div class="t" style="left:26.5px;top:1.90px;font-size:9.8px;line-height:16px;letter-spacing:0.67px;color:#111;text-rendering:geometricPrecision">1091</div></div>
<div class="a" style="left:24px;top:334px;width:160px;height:1px;background:#000;"></div>
<div class="a" style="left:270px;top:334px;width:92px;height:1px;background:#000;"></div>
<div class="a" style="left:612px;top:334px;width:730px;height:1px;background:#000;"></div>
<div class="a" style="left:0px;top:334px;width:23px;height:1px;background:#b7b7b7;"></div>
<div class="t" style="left:0px;top:317.84px;font-size:12px;line-height:16px;color:#1414f0;width:22px;text-align:center;letter-spacing:-0.9px;">84</div>
<div class="t" style="left:24px;top:318.90px;font-size:9.8px;line-height:16px;color:#111;width:74px;text-align:center;letter-spacing:0.82px;text-rendering:geometricPrecision;">R<b>****</b>550</div>
<div class="t" style="left:99px;top:318.90px;font-size:9.8px;line-height:16px;color:#111;width:85px;text-align:center;letter-spacing:1.13px;text-rendering:geometricPrecision;">10<b>*****</b>68</div>
<div class="t" style="left:270px;top:318.90px;font-size:9.8px;line-height:16px;color:#111;width:92px;text-align:center;letter-spacing:0.35px;text-rendering:geometricPrecision;">Ian</div>
<div class="t" style="left:612px;top:318.90px;font-size:9.8px;line-height:16px;color:#111;width:63px;text-align:center;letter-spacing:1.2px;text-rendering:geometricPrecision;">158</div>
<div class="t" style="left:676px;top:318.90px;font-size:9.8px;line-height:16px;color:#111;width:102px;text-align:center;letter-spacing:0.82px;text-rendering:geometricPrecision;">03/06/1997</div>
<div class="t" style="left:779px;top:318.90px;font-size:9.8px;line-height:16px;color:#111;width:93px;text-align:center;letter-spacing:-0.45px;text-rendering:geometricPrecision;">Single</div>
<div class="t" style="left:873px;top:318.90px;font-size:9.8px;line-height:16px;color:#111;width:136px;text-align:center;letter-spacing:1.0px;text-rendering:geometricPrecision;"><b>******</b>1342</div>
<div class="t" style="left:1010px;top:317.91px;font-size:11.8px;line-height:16px;color:#1468c8;width:158px;text-align:center;letter-spacing:0.48px;text-decoration:underline;text-decoration-skip-ink:none;text-underline-offset:1px;text-rendering:geometricPrecision;">ian***@gmail.com</div>
<div class="t" style="left:1169px;top:318.90px;font-size:9.8px;line-height:16px;color:#111;width:124px;text-align:center;letter-spacing:-0.15px;text-rendering:geometricPrecision;">General Trias</div>
<div class="a" style="left:1294px;top:317px;width:48px;height:17px;overflow:hidden">
<div class="t" style="left:20.5px;top:1.90px;font-size:9.8px;line-height:16px;letter-spacing:0.67px;color:#111;text-rendering:geometricPrecision">10220</div></div>
<div class="a" style="left:24px;top:352px;width:160px;height:1px;background:#000;"></div>
<div class="a" style="left:270px;top:352px;width:92px;height:1px;background:#000;"></div>
<div class="a" style="left:612px;top:352px;width:730px;height:1px;background:#000;"></div>
<div class="a" style="left:0px;top:352px;width:23px;height:1px;background:#b7b7b7;"></div>
<div class="t" style="left:0px;top:335.84px;font-size:12px;line-height:16px;color:#1414f0;width:22px;text-align:center;letter-spacing:-0.9px;">85</div>
<div class="t" style="left:24px;top:336.90px;font-size:9.8px;line-height:16px;color:#111;width:74px;text-align:center;letter-spacing:0.82px;text-rendering:geometricPrecision;">R<b>****</b>208</div>
<div class="t" style="left:99px;top:336.90px;font-size:9.8px;line-height:16px;color:#111;width:85px;text-align:center;letter-spacing:1.13px;text-rendering:geometricPrecision;">10<b>*****</b>50</div>
<div class="t" style="left:270px;top:336.90px;font-size:9.8px;line-height:16px;color:#111;width:92px;text-align:center;letter-spacing:0.35px;text-rendering:geometricPrecision;">Mark</div>
<div class="t" style="left:612px;top:336.90px;font-size:9.8px;line-height:16px;color:#111;width:63px;text-align:center;letter-spacing:1.2px;text-rendering:geometricPrecision;">159</div>
<div class="t" style="left:676px;top:336.90px;font-size:9.8px;line-height:16px;color:#111;width:102px;text-align:center;letter-spacing:0.82px;text-rendering:geometricPrecision;">29/10/1993</div>
<div class="t" style="left:779px;top:336.90px;font-size:9.8px;line-height:16px;color:#111;width:93px;text-align:center;letter-spacing:-0.45px;text-rendering:geometricPrecision;">Single</div>
<div class="t" style="left:873px;top:336.90px;font-size:9.8px;line-height:16px;color:#111;width:136px;text-align:center;letter-spacing:1.0px;text-rendering:geometricPrecision;"><b>******</b>6246</div>
<div class="t" style="left:1010px;top:335.91px;font-size:11.8px;line-height:16px;color:#1468c8;width:158px;text-align:center;letter-spacing:0.48px;text-decoration:underline;text-decoration-skip-ink:none;text-underline-offset:1px;text-rendering:geometricPrecision;">mba***@gmail.com</div>
<div class="t" style="left:1169px;top:336.90px;font-size:9.8px;line-height:16px;color:#111;width:124px;text-align:center;letter-spacing:-0.15px;text-rendering:geometricPrecision;">Silang</div>
<div class="a" style="left:1294px;top:335px;width:48px;height:17px;overflow:hidden">
<div class="t" style="left:20.5px;top:1.90px;font-size:9.8px;line-height:16px;letter-spacing:0.67px;color:#111;text-rendering:geometricPrecision">10115</div></div>
<div class="a" style="left:24px;top:370px;width:160px;height:1px;background:#000;"></div>
<div class="a" style="left:270px;top:370px;width:92px;height:1px;background:#000;"></div>
<div class="a" style="left:612px;top:370px;width:730px;height:1px;background:#000;"></div>
<div class="a" style="left:0px;top:370px;width:23px;height:1px;background:#b7b7b7;"></div>
<div class="t" style="left:0px;top:353.84px;font-size:12px;line-height:16px;color:#1414f0;width:22px;text-align:center;letter-spacing:-0.9px;">86</div>
<div class="t" style="left:24px;top:354.90px;font-size:9.8px;line-height:16px;color:#111;width:74px;text-align:center;letter-spacing:0.82px;text-rendering:geometricPrecision;">R<b>****</b>208</div>
<div class="t" style="left:99px;top:354.90px;font-size:9.8px;line-height:16px;color:#111;width:85px;text-align:center;letter-spacing:1.13px;text-rendering:geometricPrecision;">10<b>*****</b>21</div>
<div class="t" style="left:270px;top:354.90px;font-size:9.8px;line-height:16px;color:#111;width:92px;text-align:center;letter-spacing:0.35px;text-rendering:geometricPrecision;">Yvone</div>
<div class="t" style="left:612px;top:354.90px;font-size:9.8px;line-height:16px;color:#111;width:63px;text-align:center;letter-spacing:1.2px;text-rendering:geometricPrecision;">159</div>
<div class="t" style="left:676px;top:354.90px;font-size:9.8px;line-height:16px;color:#111;width:102px;text-align:center;letter-spacing:0.82px;text-rendering:geometricPrecision;">26/04/1996</div>
<div class="t" style="left:779px;top:354.90px;font-size:9.8px;line-height:16px;color:#111;width:93px;text-align:center;letter-spacing:-0.45px;text-rendering:geometricPrecision;">Single</div>
<div class="t" style="left:873px;top:354.90px;font-size:9.8px;line-height:16px;color:#111;width:136px;text-align:center;letter-spacing:1.0px;text-rendering:geometricPrecision;"><b>******</b>4374</div>
<div class="t" style="left:1010px;top:353.91px;font-size:11.8px;line-height:16px;color:#1468c8;width:158px;text-align:center;letter-spacing:0.48px;text-decoration:underline;text-decoration-skip-ink:none;text-underline-offset:1px;text-rendering:geometricPrecision;">Yvo***@gmail.com</div>
<div class="t" style="left:1169px;top:354.90px;font-size:9.8px;line-height:16px;color:#111;width:124px;text-align:center;letter-spacing:-0.15px;text-rendering:geometricPrecision;">Muntinlupa</div>
<div class="a" style="left:1294px;top:353px;width:48px;height:17px;overflow:hidden">
<div class="t" style="left:20.5px;top:1.90px;font-size:9.8px;line-height:16px;letter-spacing:0.67px;color:#111;text-rendering:geometricPrecision">10120</div></div>
<div class="a" style="left:24px;top:388px;width:160px;height:1px;background:#000;"></div>
<div class="a" style="left:270px;top:388px;width:92px;height:1px;background:#000;"></div>
<div class="a" style="left:612px;top:388px;width:730px;height:1px;background:#000;"></div>
<div class="a" style="left:0px;top:388px;width:23px;height:1px;background:#b7b7b7;"></div>
<div class="t" style="left:0px;top:371.84px;font-size:12px;line-height:16px;color:#1414f0;width:22px;text-align:center;letter-spacing:-0.9px;">87</div>
<div class="t" style="left:24px;top:372.90px;font-size:9.8px;line-height:16px;color:#111;width:74px;text-align:center;letter-spacing:0.82px;text-rendering:geometricPrecision;">R<b>****</b>208</div>
<div class="t" style="left:99px;top:372.90px;font-size:9.8px;line-height:16px;color:#111;width:85px;text-align:center;letter-spacing:1.13px;text-rendering:geometricPrecision;">10<b>*****</b>81</div>
<div class="t" style="left:270px;top:372.90px;font-size:9.8px;line-height:16px;color:#111;width:92px;text-align:center;letter-spacing:0.35px;text-rendering:geometricPrecision;">Jho</div>
<div class="t" style="left:612px;top:372.90px;font-size:9.8px;line-height:16px;color:#111;width:63px;text-align:center;letter-spacing:1.2px;text-rendering:geometricPrecision;">159</div>
<div class="t" style="left:676px;top:372.90px;font-size:9.8px;line-height:16px;color:#111;width:102px;text-align:center;letter-spacing:0.82px;text-rendering:geometricPrecision;">27/10/1992</div>
<div class="t" style="left:779px;top:372.90px;font-size:9.8px;line-height:16px;color:#111;width:93px;text-align:center;letter-spacing:-0.45px;text-rendering:geometricPrecision;">Single</div>
<div class="t" style="left:873px;top:372.90px;font-size:9.8px;line-height:16px;color:#111;width:136px;text-align:center;letter-spacing:1.0px;text-rendering:geometricPrecision;"><b>******</b>7620</div>
<div class="t" style="left:1010px;top:371.91px;font-size:11.8px;line-height:16px;color:#1468c8;width:158px;text-align:center;letter-spacing:0.48px;text-decoration:underline;text-decoration-skip-ink:none;text-underline-offset:1px;text-rendering:geometricPrecision;">jho***@gmail.com</div>
<div class="t" style="left:1169px;top:372.90px;font-size:9.8px;line-height:16px;color:#111;width:124px;text-align:center;letter-spacing:-0.15px;text-rendering:geometricPrecision;">Lipa</div>
<div class="a" style="left:1294px;top:371px;width:48px;height:17px;overflow:hidden">
<div class="t" style="left:20.5px;top:1.90px;font-size:9.8px;line-height:16px;letter-spacing:0.67px;color:#111;text-rendering:geometricPrecision">10220</div></div>
<div class="a" style="left:24px;top:406px;width:160px;height:1px;background:#000;"></div>
<div class="a" style="left:270px;top:406px;width:92px;height:1px;background:#000;"></div>
<div class="a" style="left:612px;top:406px;width:730px;height:1px;background:#000;"></div>
<div class="a" style="left:0px;top:406px;width:23px;height:1px;background:#b7b7b7;"></div>
<div class="t" style="left:0px;top:389.84px;font-size:12px;line-height:16px;color:#1414f0;width:22px;text-align:center;letter-spacing:-0.9px;">88</div>
<div class="t" style="left:24px;top:390.90px;font-size:9.8px;line-height:16px;color:#111;width:74px;text-align:center;letter-spacing:0.82px;text-rendering:geometricPrecision;">R<b>****</b>208</div>
<div class="t" style="left:99px;top:390.90px;font-size:9.8px;line-height:16px;color:#111;width:85px;text-align:center;letter-spacing:1.13px;text-rendering:geometricPrecision;">10<b>*****</b>06</div>
<div class="t" style="left:270px;top:390.90px;font-size:9.8px;line-height:16px;color:#111;width:92px;text-align:center;letter-spacing:0.35px;text-rendering:geometricPrecision;">Mary</div>
<div class="t" style="left:612px;top:390.90px;font-size:9.8px;line-height:16px;color:#111;width:63px;text-align:center;letter-spacing:1.2px;text-rendering:geometricPrecision;">159</div>
<div class="t" style="left:676px;top:390.90px;font-size:9.8px;line-height:16px;color:#111;width:102px;text-align:center;letter-spacing:0.82px;text-rendering:geometricPrecision;">17/08/1996</div>
<div class="t" style="left:779px;top:390.90px;font-size:9.8px;line-height:16px;color:#111;width:93px;text-align:center;letter-spacing:-0.45px;text-rendering:geometricPrecision;">Single</div>
<div class="t" style="left:873px;top:390.90px;font-size:9.8px;line-height:16px;color:#111;width:136px;text-align:center;letter-spacing:1.0px;text-rendering:geometricPrecision;"><b>******</b>5251</div>
<div class="t" style="left:1010px;top:389.91px;font-size:11.8px;line-height:16px;color:#1468c8;width:158px;text-align:center;letter-spacing:0.48px;text-decoration:underline;text-decoration-skip-ink:none;text-underline-offset:1px;text-rendering:geometricPrecision;">mey***@icloud.com</div>
<div class="t" style="left:1169px;top:390.90px;font-size:9.8px;line-height:16px;color:#111;width:124px;text-align:center;letter-spacing:-0.15px;text-rendering:geometricPrecision;">Muntinlupa</div>
<div class="a" style="left:1294px;top:389px;width:48px;height:17px;overflow:hidden">
<div class="t" style="left:20.5px;top:1.90px;font-size:9.8px;line-height:16px;letter-spacing:0.67px;color:#111;text-rendering:geometricPrecision">10220</div></div>
<div class="a" style="left:24px;top:424px;width:160px;height:1px;background:#000;"></div>
<div class="a" style="left:270px;top:424px;width:92px;height:1px;background:#000;"></div>
<div class="a" style="left:612px;top:424px;width:730px;height:1px;background:#000;"></div>
<div class="a" style="left:0px;top:424px;width:23px;height:1px;background:#b7b7b7;"></div>
<div class="t" style="left:0px;top:407.84px;font-size:12px;line-height:16px;color:#1414f0;width:22px;text-align:center;letter-spacing:-0.9px;">89</div>
<div class="t" style="left:24px;top:408.90px;font-size:9.8px;line-height:16px;color:#111;width:74px;text-align:center;letter-spacing:0.82px;text-rendering:geometricPrecision;">R<b>****</b>208</div>
<div class="t" style="left:99px;top:408.90px;font-size:9.8px;line-height:16px;color:#111;width:85px;text-align:center;letter-spacing:1.13px;text-rendering:geometricPrecision;">10<b>*****</b>25</div>
<div class="t" style="left:270px;top:408.90px;font-size:9.8px;line-height:16px;color:#111;width:92px;text-align:center;letter-spacing:0.35px;text-rendering:geometricPrecision;">Monique</div>
<div class="t" style="left:612px;top:408.90px;font-size:9.8px;line-height:16px;color:#111;width:63px;text-align:center;letter-spacing:1.2px;text-rendering:geometricPrecision;">159</div>
<div class="t" style="left:676px;top:408.90px;font-size:9.8px;line-height:16px;color:#111;width:102px;text-align:center;letter-spacing:0.82px;text-rendering:geometricPrecision;">22/07/1999</div>
<div class="t" style="left:779px;top:408.90px;font-size:9.8px;line-height:16px;color:#111;width:93px;text-align:center;letter-spacing:-0.45px;text-rendering:geometricPrecision;">Single</div>
<div class="t" style="left:873px;top:408.90px;font-size:9.8px;line-height:16px;color:#111;width:136px;text-align:center;letter-spacing:1.0px;text-rendering:geometricPrecision;"><b>******</b>0307</div>
<div class="t" style="left:1010px;top:407.91px;font-size:11.8px;line-height:16px;color:#1468c8;width:158px;text-align:center;letter-spacing:0.48px;text-decoration:underline;text-decoration-skip-ink:none;text-underline-offset:1px;text-rendering:geometricPrecision;">ame***@gmail.com</div>
<div class="t" style="left:1169px;top:408.90px;font-size:9.8px;line-height:16px;color:#111;width:124px;text-align:center;letter-spacing:-0.15px;text-rendering:geometricPrecision;">Bacoor</div>
<div class="a" style="left:1294px;top:407px;width:48px;height:17px;overflow:hidden">
<div class="t" style="left:20.5px;top:1.90px;font-size:9.8px;line-height:16px;letter-spacing:0.67px;color:#111;text-rendering:geometricPrecision">10220</div></div>
<div class="a" style="left:24px;top:442px;width:160px;height:1px;background:#000;"></div>
<div class="a" style="left:270px;top:442px;width:92px;height:1px;background:#000;"></div>
<div class="a" style="left:612px;top:442px;width:730px;height:1px;background:#000;"></div>
<div class="a" style="left:0px;top:442px;width:23px;height:1px;background:#b7b7b7;"></div>
<div class="t" style="left:0px;top:425.84px;font-size:12px;line-height:16px;color:#1414f0;width:22px;text-align:center;letter-spacing:-0.9px;">90</div>
<div class="t" style="left:24px;top:426.90px;font-size:9.8px;line-height:16px;color:#111;width:74px;text-align:center;letter-spacing:0.82px;text-rendering:geometricPrecision;">R<b>****</b>208</div>
<div class="t" style="left:99px;top:426.90px;font-size:9.8px;line-height:16px;color:#111;width:85px;text-align:center;letter-spacing:1.13px;text-rendering:geometricPrecision;">10<b>*****</b>28</div>
<div class="t" style="left:270px;top:426.90px;font-size:9.8px;line-height:16px;color:#111;width:92px;text-align:center;letter-spacing:0.35px;text-rendering:geometricPrecision;">Edwin</div>
<div class="t" style="left:612px;top:426.90px;font-size:9.8px;line-height:16px;color:#111;width:63px;text-align:center;letter-spacing:1.2px;text-rendering:geometricPrecision;">159</div>
<div class="t" style="left:676px;top:426.90px;font-size:9.8px;line-height:16px;color:#111;width:102px;text-align:center;letter-spacing:0.82px;text-rendering:geometricPrecision;">16/02/1979</div>
<div class="t" style="left:779px;top:426.90px;font-size:9.8px;line-height:16px;color:#111;width:93px;text-align:center;letter-spacing:-0.45px;text-rendering:geometricPrecision;">Single</div>
<div class="t" style="left:873px;top:426.90px;font-size:9.8px;line-height:16px;color:#111;width:136px;text-align:center;letter-spacing:1.0px;text-rendering:geometricPrecision;"><b>******</b>8314</div>
<div class="t" style="left:1010px;top:425.91px;font-size:11.8px;line-height:16px;color:#1468c8;width:158px;text-align:center;letter-spacing:0.48px;text-decoration:underline;text-decoration-skip-ink:none;text-underline-offset:1px;text-rendering:geometricPrecision;">jed***@gmail.com</div>
<div class="t" style="left:1169px;top:426.90px;font-size:9.8px;line-height:16px;color:#111;width:124px;text-align:center;letter-spacing:-0.15px;text-rendering:geometricPrecision;">Bacoor</div>
<div class="a" style="left:1294px;top:425px;width:48px;height:17px;overflow:hidden">
<div class="t" style="left:20.5px;top:1.90px;font-size:9.8px;line-height:16px;letter-spacing:0.67px;color:#111;text-rendering:geometricPrecision">10220</div></div>
<div class="a" style="left:24px;top:460px;width:160px;height:1px;background:#000;"></div>
<div class="a" style="left:270px;top:460px;width:92px;height:1px;background:#000;"></div>
<div class="a" style="left:612px;top:460px;width:730px;height:1px;background:#000;"></div>
<div class="a" style="left:0px;top:460px;width:23px;height:1px;background:#b7b7b7;"></div>
<div class="t" style="left:0px;top:443.84px;font-size:12px;line-height:16px;color:#1414f0;width:22px;text-align:center;letter-spacing:-0.9px;">91</div>
<div class="t" style="left:24px;top:444.90px;font-size:9.8px;line-height:16px;color:#111;width:74px;text-align:center;letter-spacing:0.82px;text-rendering:geometricPrecision;">R<b>****</b>208</div>
<div class="t" style="left:99px;top:444.90px;font-size:9.8px;line-height:16px;color:#111;width:85px;text-align:center;letter-spacing:1.13px;text-rendering:geometricPrecision;">10<b>*****</b>21</div>
<div class="t" style="left:270px;top:444.90px;font-size:9.8px;line-height:16px;color:#111;width:92px;text-align:center;letter-spacing:0.35px;text-rendering:geometricPrecision;">Aira</div>
<div class="t" style="left:612px;top:444.90px;font-size:9.8px;line-height:16px;color:#111;width:63px;text-align:center;letter-spacing:1.2px;text-rendering:geometricPrecision;">159</div>
<div class="t" style="left:676px;top:444.90px;font-size:9.8px;line-height:16px;color:#111;width:102px;text-align:center;letter-spacing:0.82px;text-rendering:geometricPrecision;">19/06/2001</div>
<div class="t" style="left:779px;top:444.90px;font-size:9.8px;line-height:16px;color:#111;width:93px;text-align:center;letter-spacing:-0.45px;text-rendering:geometricPrecision;">Single</div>
<div class="t" style="left:873px;top:444.90px;font-size:9.8px;line-height:16px;color:#111;width:136px;text-align:center;letter-spacing:1.0px;text-rendering:geometricPrecision;"><b>******</b>0206</div>
<div class="t" style="left:1010px;top:443.91px;font-size:11.8px;line-height:16px;color:#1468c8;width:158px;text-align:center;letter-spacing:0.48px;text-decoration:underline;text-decoration-skip-ink:none;text-underline-offset:1px;text-rendering:geometricPrecision;">aga***@gmail.com</div>
<div class="t" style="left:1169px;top:444.90px;font-size:9.8px;line-height:16px;color:#111;width:124px;text-align:center;letter-spacing:-0.15px;text-rendering:geometricPrecision;">Dasmariñas</div>
<div class="a" style="left:1294px;top:443px;width:48px;height:17px;overflow:hidden">
<div class="t" style="left:20.5px;top:1.90px;font-size:9.8px;line-height:16px;letter-spacing:0.67px;color:#111;text-rendering:geometricPrecision">10220</div></div>
<div class="a" style="left:24px;top:478px;width:160px;height:1px;background:#000;"></div>
<div class="a" style="left:270px;top:478px;width:92px;height:1px;background:#000;"></div>
<div class="a" style="left:612px;top:478px;width:730px;height:1px;background:#000;"></div>
<div class="a" style="left:0px;top:478px;width:23px;height:1px;background:#b7b7b7;"></div>
<div class="t" style="left:0px;top:461.84px;font-size:12px;line-height:16px;color:#1414f0;width:22px;text-align:center;letter-spacing:-0.9px;">92</div>
<div class="t" style="left:24px;top:462.90px;font-size:9.8px;line-height:16px;color:#111;width:74px;text-align:center;letter-spacing:0.82px;text-rendering:geometricPrecision;">R<b>****</b>208</div>
<div class="t" style="left:99px;top:462.90px;font-size:9.8px;line-height:16px;color:#111;width:85px;text-align:center;letter-spacing:1.13px;text-rendering:geometricPrecision;">10<b>*****</b>93</div>
<div class="t" style="left:270px;top:462.90px;font-size:9.8px;line-height:16px;color:#111;width:92px;text-align:center;letter-spacing:0.35px;text-rendering:geometricPrecision;">Darius</div>
<div class="t" style="left:612px;top:462.90px;font-size:9.8px;line-height:16px;color:#111;width:63px;text-align:center;letter-spacing:1.2px;text-rendering:geometricPrecision;">159</div>
<div class="t" style="left:676px;top:462.90px;font-size:9.8px;line-height:16px;color:#111;width:102px;text-align:center;letter-spacing:0.82px;text-rendering:geometricPrecision;">23/03/2001</div>
<div class="t" style="left:779px;top:462.90px;font-size:9.8px;line-height:16px;color:#111;width:93px;text-align:center;letter-spacing:-0.45px;text-rendering:geometricPrecision;">Single</div>
<div class="t" style="left:873px;top:462.90px;font-size:9.8px;line-height:16px;color:#111;width:136px;text-align:center;letter-spacing:1.0px;text-rendering:geometricPrecision;"><b>******</b>1243</div>
<div class="t" style="left:1010px;top:461.91px;font-size:11.8px;line-height:16px;color:#1468c8;width:158px;text-align:center;letter-spacing:0.48px;text-decoration:underline;text-decoration-skip-ink:none;text-underline-offset:1px;text-rendering:geometricPrecision;">fin***@gmail.com</div>
<div class="t" style="left:1169px;top:462.90px;font-size:9.8px;line-height:16px;color:#111;width:124px;text-align:center;letter-spacing:-0.15px;text-rendering:geometricPrecision;">Sta. Rosa</div>
<div class="a" style="left:1294px;top:461px;width:48px;height:17px;overflow:hidden">
<div class="t" style="left:20.5px;top:1.90px;font-size:9.8px;line-height:16px;letter-spacing:0.67px;color:#111;text-rendering:geometricPrecision">10142</div></div>
<div class="a" style="left:24px;top:496px;width:160px;height:1px;background:#000;"></div>
<div class="a" style="left:270px;top:496px;width:92px;height:1px;background:#000;"></div>
<div class="a" style="left:612px;top:496px;width:730px;height:1px;background:#000;"></div>
<div class="a" style="left:0px;top:496px;width:23px;height:1px;background:#b7b7b7;"></div>
<div class="t" style="left:0px;top:479.84px;font-size:12px;line-height:16px;color:#1414f0;width:22px;text-align:center;letter-spacing:-0.9px;">93</div>
<div class="t" style="left:24px;top:480.90px;font-size:9.8px;line-height:16px;color:#111;width:74px;text-align:center;letter-spacing:0.82px;text-rendering:geometricPrecision;">R<b>****</b>208</div>
<div class="t" style="left:99px;top:480.90px;font-size:9.8px;line-height:16px;color:#111;width:85px;text-align:center;letter-spacing:1.13px;text-rendering:geometricPrecision;">10<b>*****</b>78</div>
<div class="t" style="left:270px;top:480.90px;font-size:9.8px;line-height:16px;color:#111;width:92px;text-align:center;letter-spacing:0.35px;text-rendering:geometricPrecision;">Joshua</div>
<div class="t" style="left:612px;top:480.90px;font-size:9.8px;line-height:16px;color:#111;width:63px;text-align:center;letter-spacing:1.2px;text-rendering:geometricPrecision;">159</div>
<div class="t" style="left:676px;top:480.90px;font-size:9.8px;line-height:16px;color:#111;width:102px;text-align:center;letter-spacing:0.82px;text-rendering:geometricPrecision;">19/10/1995</div>
<div class="t" style="left:779px;top:480.90px;font-size:9.8px;line-height:16px;color:#111;width:93px;text-align:center;letter-spacing:-0.45px;text-rendering:geometricPrecision;">Single</div>
<div class="t" style="left:873px;top:480.90px;font-size:9.8px;line-height:16px;color:#111;width:136px;text-align:center;letter-spacing:1.0px;text-rendering:geometricPrecision;"><b>******</b>1042</div>
<div class="t" style="left:1010px;top:479.91px;font-size:11.8px;line-height:16px;color:#1468c8;width:158px;text-align:center;letter-spacing:0.48px;text-decoration:underline;text-decoration-skip-ink:none;text-underline-offset:1px;text-rendering:geometricPrecision;">njl***@yahoo.com.ph</div>
<div class="t" style="left:1169px;top:480.90px;font-size:9.8px;line-height:16px;color:#111;width:124px;text-align:center;letter-spacing:-0.15px;text-rendering:geometricPrecision;">Carmona</div>
<div class="a" style="left:1294px;top:479px;width:48px;height:17px;overflow:hidden">
<div class="t" style="left:20.5px;top:1.90px;font-size:9.8px;line-height:16px;letter-spacing:0.67px;color:#111;text-rendering:geometricPrecision">10220</div></div>
<div class="a" style="left:24px;top:514px;width:160px;height:1px;background:#000;"></div>
<div class="a" style="left:270px;top:514px;width:92px;height:1px;background:#000;"></div>
<div class="a" style="left:612px;top:514px;width:730px;height:1px;background:#000;"></div>
<div class="a" style="left:0px;top:514px;width:23px;height:1px;background:#b7b7b7;"></div>
<div class="t" style="left:0px;top:497.84px;font-size:12px;line-height:16px;color:#1414f0;width:22px;text-align:center;letter-spacing:-0.9px;">94</div>
<div class="t" style="left:24px;top:498.90px;font-size:9.8px;line-height:16px;color:#111;width:74px;text-align:center;letter-spacing:0.82px;text-rendering:geometricPrecision;">R<b>****</b>208</div>
<div class="t" style="left:99px;top:498.90px;font-size:9.8px;line-height:16px;color:#111;width:85px;text-align:center;letter-spacing:1.13px;text-rendering:geometricPrecision;">10<b>*****</b>07</div>
<div class="t" style="left:270px;top:498.90px;font-size:9.8px;line-height:16px;color:#111;width:92px;text-align:center;letter-spacing:0.35px;text-rendering:geometricPrecision;">Maria</div>
<div class="t" style="left:612px;top:498.90px;font-size:9.8px;line-height:16px;color:#111;width:63px;text-align:center;letter-spacing:1.2px;text-rendering:geometricPrecision;">159</div>
<div class="t" style="left:676px;top:498.90px;font-size:9.8px;line-height:16px;color:#111;width:102px;text-align:center;letter-spacing:0.82px;text-rendering:geometricPrecision;">06/09/2001</div>
<div class="t" style="left:779px;top:498.90px;font-size:9.8px;line-height:16px;color:#111;width:93px;text-align:center;letter-spacing:-0.45px;text-rendering:geometricPrecision;">Single</div>
<div class="t" style="left:873px;top:498.90px;font-size:9.8px;line-height:16px;color:#111;width:136px;text-align:center;letter-spacing:1.0px;text-rendering:geometricPrecision;"><b>******</b>8698</div>
<div class="t" style="left:1010px;top:497.91px;font-size:11.8px;line-height:16px;color:#1468c8;width:158px;text-align:center;letter-spacing:0.48px;text-decoration:underline;text-decoration-skip-ink:none;text-underline-offset:1px;text-rendering:geometricPrecision;">mjm***@gmail.com</div>
<div class="t" style="left:1169px;top:498.90px;font-size:9.8px;line-height:16px;color:#111;width:124px;text-align:center;letter-spacing:-0.15px;text-rendering:geometricPrecision;">Muntinlupa</div>
<div class="a" style="left:1294px;top:497px;width:48px;height:17px;overflow:hidden">
<div class="t" style="left:20.5px;top:1.90px;font-size:9.8px;line-height:16px;letter-spacing:0.67px;color:#111;text-rendering:geometricPrecision">10220</div></div>
<div class="a" style="left:24px;top:532px;width:160px;height:1px;background:#000;"></div>
<div class="a" style="left:270px;top:532px;width:92px;height:1px;background:#000;"></div>
<div class="a" style="left:612px;top:532px;width:730px;height:1px;background:#000;"></div>
<div class="a" style="left:0px;top:532px;width:23px;height:1px;background:#b7b7b7;"></div>
<div class="t" style="left:0px;top:515.84px;font-size:12px;line-height:16px;color:#1414f0;width:22px;text-align:center;letter-spacing:-0.9px;">95</div>
<div class="t" style="left:24px;top:516.90px;font-size:9.8px;line-height:16px;color:#111;width:74px;text-align:center;letter-spacing:0.82px;text-rendering:geometricPrecision;">R<b>****</b>208</div>
<div class="t" style="left:99px;top:516.90px;font-size:9.8px;line-height:16px;color:#111;width:85px;text-align:center;letter-spacing:1.13px;text-rendering:geometricPrecision;">10<b>*****</b>05</div>
<div class="t" style="left:270px;top:516.90px;font-size:9.8px;line-height:16px;color:#111;width:92px;text-align:center;letter-spacing:0.35px;text-rendering:geometricPrecision;">Rodel</div>
<div class="t" style="left:612px;top:516.90px;font-size:9.8px;line-height:16px;color:#111;width:63px;text-align:center;letter-spacing:1.2px;text-rendering:geometricPrecision;">159</div>
<div class="t" style="left:676px;top:516.90px;font-size:9.8px;line-height:16px;color:#111;width:102px;text-align:center;letter-spacing:0.82px;text-rendering:geometricPrecision;">26/01/2002</div>
<div class="t" style="left:779px;top:516.90px;font-size:9.8px;line-height:16px;color:#111;width:93px;text-align:center;letter-spacing:-0.45px;text-rendering:geometricPrecision;">Single</div>
<div class="t" style="left:873px;top:516.90px;font-size:9.8px;line-height:16px;color:#111;width:136px;text-align:center;letter-spacing:1.0px;text-rendering:geometricPrecision;"><b>******</b>5731</div>
<div class="t" style="left:1010px;top:515.91px;font-size:11.8px;line-height:16px;color:#1468c8;width:158px;text-align:center;letter-spacing:0.48px;text-decoration:underline;text-decoration-skip-ink:none;text-underline-offset:1px;text-rendering:geometricPrecision;">Rno***@gmail.com</div>
<div class="t" style="left:1169px;top:516.90px;font-size:9.8px;line-height:16px;color:#111;width:124px;text-align:center;letter-spacing:-0.15px;text-rendering:geometricPrecision;">General Trias</div>
<div class="a" style="left:1294px;top:515px;width:48px;height:17px;overflow:hidden">
<div class="t" style="left:20.5px;top:1.90px;font-size:9.8px;line-height:16px;letter-spacing:0.67px;color:#111;text-rendering:geometricPrecision">10220</div></div>
<div class="a" style="left:24px;top:550px;width:160px;height:1px;background:#000;"></div>
<div class="a" style="left:270px;top:550px;width:92px;height:1px;background:#000;"></div>
<div class="a" style="left:612px;top:550px;width:730px;height:1px;background:#000;"></div>
<div class="a" style="left:0px;top:550px;width:23px;height:1px;background:#b7b7b7;"></div>
<div class="t" style="left:0px;top:533.84px;font-size:12px;line-height:16px;color:#1414f0;width:22px;text-align:center;letter-spacing:-0.9px;">96</div>
<div class="t" style="left:24px;top:534.90px;font-size:9.8px;line-height:16px;color:#111;width:74px;text-align:center;letter-spacing:0.82px;text-rendering:geometricPrecision;">R<b>****</b>208</div>
<div class="t" style="left:99px;top:534.90px;font-size:9.8px;line-height:16px;color:#111;width:85px;text-align:center;letter-spacing:1.13px;text-rendering:geometricPrecision;">10<b>*****</b>79</div>
<div class="t" style="left:270px;top:534.90px;font-size:9.8px;line-height:16px;color:#111;width:92px;text-align:center;letter-spacing:0.35px;text-rendering:geometricPrecision;">Henry</div>
<div class="t" style="left:612px;top:534.90px;font-size:9.8px;line-height:16px;color:#111;width:63px;text-align:center;letter-spacing:1.2px;text-rendering:geometricPrecision;">159</div>
<div class="t" style="left:676px;top:534.90px;font-size:9.8px;line-height:16px;color:#111;width:102px;text-align:center;letter-spacing:0.82px;text-rendering:geometricPrecision;">03/10/1982</div>
<div class="t" style="left:779px;top:534.90px;font-size:9.8px;line-height:16px;color:#111;width:93px;text-align:center;letter-spacing:-0.45px;text-rendering:geometricPrecision;">Single</div>
<div class="t" style="left:873px;top:534.90px;font-size:9.8px;line-height:16px;color:#111;width:136px;text-align:center;letter-spacing:1.0px;text-rendering:geometricPrecision;"><b>******</b>5420</div>
<div class="t" style="left:1010px;top:533.91px;font-size:11.8px;line-height:16px;color:#1468c8;width:158px;text-align:center;letter-spacing:0.48px;text-decoration:underline;text-decoration-skip-ink:none;text-underline-offset:1px;text-rendering:geometricPrecision;">nuq***@gmail.com</div>
<div class="t" style="left:1169px;top:534.90px;font-size:9.8px;line-height:16px;color:#111;width:124px;text-align:center;letter-spacing:-0.15px;text-rendering:geometricPrecision;">Las Piñas</div>
<div class="a" style="left:1294px;top:533px;width:48px;height:17px;overflow:hidden">
<div class="t" style="left:20.5px;top:1.90px;font-size:9.8px;line-height:16px;letter-spacing:0.67px;color:#111;text-rendering:geometricPrecision">10220</div></div>
<div class="a" style="left:24px;top:568px;width:160px;height:1px;background:#000;"></div>
<div class="a" style="left:270px;top:568px;width:92px;height:1px;background:#000;"></div>
<div class="a" style="left:612px;top:568px;width:730px;height:1px;background:#000;"></div>
<div class="a" style="left:0px;top:568px;width:23px;height:1px;background:#b7b7b7;"></div>
<div class="t" style="left:0px;top:551.84px;font-size:12px;line-height:16px;color:#1414f0;width:22px;text-align:center;letter-spacing:-0.9px;">97</div>
<div class="t" style="left:24px;top:552.90px;font-size:9.8px;line-height:16px;color:#111;width:74px;text-align:center;letter-spacing:0.82px;text-rendering:geometricPrecision;">R<b>****</b>208</div>
<div class="t" style="left:99px;top:552.90px;font-size:9.8px;line-height:16px;color:#111;width:85px;text-align:center;letter-spacing:1.13px;text-rendering:geometricPrecision;">10<b>*****</b>36</div>
<div class="t" style="left:270px;top:552.90px;font-size:9.8px;line-height:16px;color:#111;width:92px;text-align:center;letter-spacing:0.35px;text-rendering:geometricPrecision;">Tiffany</div>
<div class="t" style="left:612px;top:552.90px;font-size:9.8px;line-height:16px;color:#111;width:63px;text-align:center;letter-spacing:1.2px;text-rendering:geometricPrecision;">159</div>
<div class="t" style="left:676px;top:552.90px;font-size:9.8px;line-height:16px;color:#111;width:102px;text-align:center;letter-spacing:0.82px;text-rendering:geometricPrecision;">15/10/2002</div>
<div class="t" style="left:779px;top:552.90px;font-size:9.8px;line-height:16px;color:#111;width:93px;text-align:center;letter-spacing:-0.45px;text-rendering:geometricPrecision;">Single</div>
<div class="t" style="left:873px;top:552.90px;font-size:9.8px;line-height:16px;color:#111;width:136px;text-align:center;letter-spacing:1.0px;text-rendering:geometricPrecision;"><b>******</b>6245</div>
<div class="t" style="left:1010px;top:551.91px;font-size:11.8px;line-height:16px;color:#1468c8;width:158px;text-align:center;letter-spacing:0.48px;text-decoration:underline;text-decoration-skip-ink:none;text-underline-offset:1px;text-rendering:geometricPrecision;">par***@gmail.com</div>
<div class="t" style="left:1169px;top:552.90px;font-size:9.8px;line-height:16px;color:#111;width:124px;text-align:center;letter-spacing:-0.15px;text-rendering:geometricPrecision;">Muntinlupa</div>
<div class="a" style="left:1294px;top:551px;width:48px;height:17px;overflow:hidden">
<div class="t" style="left:20.5px;top:1.90px;font-size:9.8px;line-height:16px;letter-spacing:0.67px;color:#111;text-rendering:geometricPrecision">10220</div></div>
<div class="a" style="left:24px;top:586px;width:160px;height:1px;background:#000;"></div>
<div class="a" style="left:270px;top:586px;width:92px;height:1px;background:#000;"></div>
<div class="a" style="left:612px;top:586px;width:730px;height:1px;background:#000;"></div>
<div class="a" style="left:0px;top:586px;width:23px;height:1px;background:#b7b7b7;"></div>
<div class="t" style="left:0px;top:569.84px;font-size:12px;line-height:16px;color:#1414f0;width:22px;text-align:center;letter-spacing:-0.9px;">98</div>
<div class="t" style="left:24px;top:570.90px;font-size:9.8px;line-height:16px;color:#111;width:74px;text-align:center;letter-spacing:0.82px;text-rendering:geometricPrecision;">R<b>****</b>208</div>
<div class="t" style="left:99px;top:570.90px;font-size:9.8px;line-height:16px;color:#111;width:85px;text-align:center;letter-spacing:1.13px;text-rendering:geometricPrecision;">10<b>*****</b>82</div>
<div class="t" style="left:270px;top:570.90px;font-size:9.8px;line-height:16px;color:#111;width:92px;text-align:center;letter-spacing:0.35px;text-rendering:geometricPrecision;">Carl</div>
<div class="t" style="left:612px;top:570.90px;font-size:9.8px;line-height:16px;color:#111;width:63px;text-align:center;letter-spacing:1.2px;text-rendering:geometricPrecision;">159</div>
<div class="t" style="left:676px;top:570.90px;font-size:9.8px;line-height:16px;color:#111;width:102px;text-align:center;letter-spacing:0.82px;text-rendering:geometricPrecision;">26/06/1994</div>
<div class="t" style="left:779px;top:570.90px;font-size:9.8px;line-height:16px;color:#111;width:93px;text-align:center;letter-spacing:-0.45px;text-rendering:geometricPrecision;">Single</div>
<div class="t" style="left:873px;top:570.90px;font-size:9.8px;line-height:16px;color:#111;width:136px;text-align:center;letter-spacing:1.0px;text-rendering:geometricPrecision;"><b>******</b>7722</div>
<div class="t" style="left:1010px;top:569.91px;font-size:11.8px;line-height:16px;color:#1468c8;width:158px;text-align:center;letter-spacing:0.48px;text-decoration:underline;text-decoration-skip-ink:none;text-underline-offset:1px;text-rendering:geometricPrecision;">car***@gmail.com</div>
<div class="t" style="left:1169px;top:570.90px;font-size:9.8px;line-height:16px;color:#111;width:124px;text-align:center;letter-spacing:-0.15px;text-rendering:geometricPrecision;">Imus</div>
<div class="a" style="left:1294px;top:569px;width:48px;height:17px;overflow:hidden">
<div class="t" style="left:20.5px;top:1.90px;font-size:9.8px;line-height:16px;letter-spacing:0.67px;color:#111;text-rendering:geometricPrecision">10220</div></div>
<div class="a" style="left:24px;top:604px;width:160px;height:1px;background:#000;"></div>
<div class="a" style="left:270px;top:604px;width:92px;height:1px;background:#000;"></div>
<div class="a" style="left:612px;top:604px;width:730px;height:1px;background:#000;"></div>
<div class="a" style="left:0px;top:604px;width:23px;height:1px;background:#b7b7b7;"></div>
<div class="t" style="left:0px;top:587.84px;font-size:12px;line-height:16px;color:#1414f0;width:22px;text-align:center;letter-spacing:-0.9px;">99</div>
<div class="t" style="left:24px;top:588.90px;font-size:9.8px;line-height:16px;color:#111;width:74px;text-align:center;letter-spacing:0.82px;text-rendering:geometricPrecision;">R<b>****</b>208</div>
<div class="t" style="left:99px;top:588.90px;font-size:9.8px;line-height:16px;color:#111;width:85px;text-align:center;letter-spacing:1.13px;text-rendering:geometricPrecision;">10<b>*****</b>08</div>
<div class="t" style="left:270px;top:588.90px;font-size:9.8px;line-height:16px;color:#111;width:92px;text-align:center;letter-spacing:0.35px;text-rendering:geometricPrecision;">Jan</div>
<div class="t" style="left:612px;top:588.90px;font-size:9.8px;line-height:16px;color:#111;width:63px;text-align:center;letter-spacing:1.2px;text-rendering:geometricPrecision;">159</div>
<div class="t" style="left:676px;top:588.90px;font-size:9.8px;line-height:16px;color:#111;width:102px;text-align:center;letter-spacing:0.82px;text-rendering:geometricPrecision;">24/01/1985</div>
<div class="t" style="left:779px;top:588.90px;font-size:9.8px;line-height:16px;color:#111;width:93px;text-align:center;letter-spacing:-0.45px;text-rendering:geometricPrecision;">Single</div>
<div class="t" style="left:873px;top:588.90px;font-size:9.8px;line-height:16px;color:#111;width:136px;text-align:center;letter-spacing:1.0px;text-rendering:geometricPrecision;"><b>******</b>0270</div>
<div class="t" style="left:1010px;top:587.91px;font-size:11.8px;line-height:16px;color:#1468c8;width:158px;text-align:center;letter-spacing:0.48px;text-decoration:underline;text-decoration-skip-ink:none;text-underline-offset:1px;text-rendering:geometricPrecision;">jan***@gmail.com</div>
<div class="t" style="left:1169px;top:588.90px;font-size:9.8px;line-height:16px;color:#111;width:124px;text-align:center;letter-spacing:-0.15px;text-rendering:geometricPrecision;">Bacoor</div>
<div class="a" style="left:1294px;top:587px;width:48px;height:17px;overflow:hidden">
<div class="t" style="left:20.5px;top:1.90px;font-size:9.8px;line-height:16px;letter-spacing:0.67px;color:#111;text-rendering:geometricPrecision">10220</div></div>
<div class="a" style="left:24px;top:622px;width:160px;height:1px;background:#000;"></div>
<div class="a" style="left:270px;top:622px;width:92px;height:1px;background:#000;"></div>
<div class="a" style="left:612px;top:622px;width:730px;height:1px;background:#000;"></div>
<div class="a" style="left:0px;top:622px;width:23px;height:1px;background:#b7b7b7;"></div>
<div class="t" style="left:0px;top:605.84px;font-size:12px;line-height:16px;color:#1414f0;width:22px;text-align:center;letter-spacing:-0.9px;">100</div>
<div class="t" style="left:24px;top:606.90px;font-size:9.8px;line-height:16px;color:#111;width:74px;text-align:center;letter-spacing:0.82px;text-rendering:geometricPrecision;">R<b>****</b>208</div>
<div class="t" style="left:99px;top:606.90px;font-size:9.8px;line-height:16px;color:#111;width:85px;text-align:center;letter-spacing:1.13px;text-rendering:geometricPrecision;">10<b>*****</b>80</div>
<div class="t" style="left:270px;top:606.90px;font-size:9.8px;line-height:16px;color:#111;width:92px;text-align:center;letter-spacing:0.35px;text-rendering:geometricPrecision;">Crizel</div>
<div class="t" style="left:612px;top:606.90px;font-size:9.8px;line-height:16px;color:#111;width:63px;text-align:center;letter-spacing:1.2px;text-rendering:geometricPrecision;">159</div>
<div class="t" style="left:676px;top:606.90px;font-size:9.8px;line-height:16px;color:#111;width:102px;text-align:center;letter-spacing:0.82px;text-rendering:geometricPrecision;">10/11/1997</div>
<div class="t" style="left:779px;top:606.90px;font-size:9.8px;line-height:16px;color:#111;width:93px;text-align:center;letter-spacing:-0.45px;text-rendering:geometricPrecision;">Single</div>
<div class="t" style="left:873px;top:606.90px;font-size:9.8px;line-height:16px;color:#111;width:136px;text-align:center;letter-spacing:1.0px;text-rendering:geometricPrecision;"><b>******</b>3742</div>
<div class="t" style="left:1010px;top:605.91px;font-size:11.8px;line-height:16px;color:#1468c8;width:158px;text-align:center;letter-spacing:0.48px;text-decoration:underline;text-decoration-skip-ink:none;text-underline-offset:1px;text-rendering:geometricPrecision;">cri***@gmail.com</div>
<div class="t" style="left:1169px;top:606.90px;font-size:9.8px;line-height:16px;color:#111;width:124px;text-align:center;letter-spacing:-0.15px;text-rendering:geometricPrecision;">Bacoor</div>
<div class="a" style="left:1294px;top:605px;width:48px;height:17px;overflow:hidden">
<div class="t" style="left:20.5px;top:1.90px;font-size:9.8px;line-height:16px;letter-spacing:0.67px;color:#111;text-rendering:geometricPrecision">10220</div></div>
<div class="a" style="left:24px;top:640px;width:160px;height:1px;background:#000;"></div>
<div class="a" style="left:270px;top:640px;width:92px;height:1px;background:#000;"></div>
<div class="a" style="left:612px;top:640px;width:730px;height:1px;background:#000;"></div>
<div class="a" style="left:0px;top:640px;width:23px;height:1px;background:#b7b7b7;"></div>
<div class="t" style="left:0px;top:623.84px;font-size:12px;line-height:16px;color:#1414f0;width:22px;text-align:center;letter-spacing:-0.9px;">101</div>
<div class="t" style="left:24px;top:624.90px;font-size:9.8px;line-height:16px;color:#111;width:74px;text-align:center;letter-spacing:0.82px;text-rendering:geometricPrecision;">R<b>****</b>208</div>
<div class="t" style="left:99px;top:624.90px;font-size:9.8px;line-height:16px;color:#111;width:85px;text-align:center;letter-spacing:1.13px;text-rendering:geometricPrecision;">10<b>*****</b>83</div>
<div class="t" style="left:270px;top:624.90px;font-size:9.8px;line-height:16px;color:#111;width:92px;text-align:center;letter-spacing:0.35px;text-rendering:geometricPrecision;">Giomarie</div>
<div class="t" style="left:612px;top:624.90px;font-size:9.8px;line-height:16px;color:#111;width:63px;text-align:center;letter-spacing:1.2px;text-rendering:geometricPrecision;">159</div>
<div class="t" style="left:676px;top:624.90px;font-size:9.8px;line-height:16px;color:#111;width:102px;text-align:center;letter-spacing:0.82px;text-rendering:geometricPrecision;">19/12/1992</div>
<div class="t" style="left:779px;top:624.90px;font-size:9.8px;line-height:16px;color:#111;width:93px;text-align:center;letter-spacing:-0.45px;text-rendering:geometricPrecision;">Single</div>
<div class="t" style="left:873px;top:624.90px;font-size:9.8px;line-height:16px;color:#111;width:136px;text-align:center;letter-spacing:1.0px;text-rendering:geometricPrecision;"><b>******</b>8754</div>
<div class="t" style="left:1010px;top:623.91px;font-size:11.8px;line-height:16px;color:#1468c8;width:158px;text-align:center;letter-spacing:0.48px;text-decoration:underline;text-decoration-skip-ink:none;text-underline-offset:1px;text-rendering:geometricPrecision;">gio***@gmail.com</div>
<div class="t" style="left:1169px;top:624.90px;font-size:9.8px;line-height:16px;color:#111;width:124px;text-align:center;letter-spacing:-0.15px;text-rendering:geometricPrecision;">Imus</div>
<div class="a" style="left:1294px;top:623px;width:48px;height:17px;overflow:hidden">
<div class="t" style="left:20.5px;top:1.90px;font-size:9.8px;line-height:16px;letter-spacing:0.67px;color:#111;text-rendering:geometricPrecision">10162</div></div>
<div class="a" style="left:24px;top:658px;width:160px;height:1px;background:#000;"></div>
<div class="a" style="left:270px;top:658px;width:92px;height:1px;background:#000;"></div>
<div class="a" style="left:612px;top:658px;width:730px;height:1px;background:#000;"></div>
<div class="a" style="left:0px;top:658px;width:23px;height:1px;background:#b7b7b7;"></div>
<div class="t" style="left:0px;top:641.84px;font-size:12px;line-height:16px;color:#1414f0;width:22px;text-align:center;letter-spacing:-0.9px;">102</div>
<div class="t" style="left:24px;top:642.90px;font-size:9.8px;line-height:16px;color:#111;width:74px;text-align:center;letter-spacing:0.82px;text-rendering:geometricPrecision;">R<b>****</b>208</div>
<div class="t" style="left:99px;top:642.90px;font-size:9.8px;line-height:16px;color:#111;width:85px;text-align:center;letter-spacing:1.13px;text-rendering:geometricPrecision;">10<b>*****</b>02</div>
<div class="t" style="left:270px;top:642.90px;font-size:9.8px;line-height:16px;color:#111;width:92px;text-align:center;letter-spacing:0.35px;text-rendering:geometricPrecision;">Ailyn</div>
<div class="t" style="left:612px;top:642.90px;font-size:9.8px;line-height:16px;color:#111;width:63px;text-align:center;letter-spacing:1.2px;text-rendering:geometricPrecision;">159</div>
<div class="t" style="left:676px;top:642.90px;font-size:9.8px;line-height:16px;color:#111;width:102px;text-align:center;letter-spacing:0.82px;text-rendering:geometricPrecision;">14/11/1988</div>
<div class="t" style="left:779px;top:642.90px;font-size:9.8px;line-height:16px;color:#111;width:93px;text-align:center;letter-spacing:-0.45px;text-rendering:geometricPrecision;">Single</div>
<div class="t" style="left:873px;top:642.90px;font-size:9.8px;line-height:16px;color:#111;width:136px;text-align:center;letter-spacing:1.0px;text-rendering:geometricPrecision;"><b>******</b>9145</div>
<div class="t" style="left:1010px;top:641.91px;font-size:11.8px;line-height:16px;color:#1468c8;width:158px;text-align:center;letter-spacing:0.48px;text-decoration:underline;text-decoration-skip-ink:none;text-underline-offset:1px;text-rendering:geometricPrecision;">ail***@gmail.com</div>
<div class="t" style="left:1169px;top:642.90px;font-size:9.8px;line-height:16px;color:#111;width:124px;text-align:center;letter-spacing:-0.15px;text-rendering:geometricPrecision;">GMA</div>
<div class="a" style="left:1294px;top:641px;width:48px;height:17px;overflow:hidden">
<div class="t" style="left:20.5px;top:1.90px;font-size:9.8px;line-height:16px;letter-spacing:0.67px;color:#111;text-rendering:geometricPrecision">10220</div></div>
<div class="a" style="left:24px;top:676px;width:160px;height:1px;background:#000;"></div>
<div class="a" style="left:270px;top:676px;width:92px;height:1px;background:#000;"></div>
<div class="a" style="left:612px;top:676px;width:730px;height:1px;background:#000;"></div>
<div class="a" style="left:0px;top:676px;width:23px;height:1px;background:#b7b7b7;"></div>
<div class="t" style="left:0px;top:659.84px;font-size:12px;line-height:16px;color:#1414f0;width:22px;text-align:center;letter-spacing:-0.9px;">103</div>
<div class="t" style="left:24px;top:660.90px;font-size:9.8px;line-height:16px;color:#111;width:74px;text-align:center;letter-spacing:0.82px;text-rendering:geometricPrecision;">R<b>****</b>208</div>
<div class="t" style="left:99px;top:660.90px;font-size:9.8px;line-height:16px;color:#111;width:85px;text-align:center;letter-spacing:1.13px;text-rendering:geometricPrecision;">10<b>*****</b>31</div>
<div class="t" style="left:270px;top:660.90px;font-size:9.8px;line-height:16px;color:#111;width:92px;text-align:center;letter-spacing:0.35px;text-rendering:geometricPrecision;">Rowel</div>
<div class="t" style="left:612px;top:660.90px;font-size:9.8px;line-height:16px;color:#111;width:63px;text-align:center;letter-spacing:1.2px;text-rendering:geometricPrecision;">159</div>
<div class="t" style="left:676px;top:660.90px;font-size:9.8px;line-height:16px;color:#111;width:102px;text-align:center;letter-spacing:0.82px;text-rendering:geometricPrecision;">23/09/2000</div>
<div class="t" style="left:779px;top:660.90px;font-size:9.8px;line-height:16px;color:#111;width:93px;text-align:center;letter-spacing:-0.45px;text-rendering:geometricPrecision;">Single</div>
<div class="t" style="left:873px;top:660.90px;font-size:9.8px;line-height:16px;color:#111;width:136px;text-align:center;letter-spacing:1.0px;text-rendering:geometricPrecision;"><b>******</b>5062</div>
<div class="t" style="left:1010px;top:659.91px;font-size:11.8px;line-height:16px;color:#1468c8;width:158px;text-align:center;letter-spacing:0.48px;text-decoration:underline;text-decoration-skip-ink:none;text-underline-offset:1px;text-rendering:geometricPrecision;">Row***@gmail.com</div>
<div class="t" style="left:1169px;top:660.90px;font-size:9.8px;line-height:16px;color:#111;width:124px;text-align:center;letter-spacing:-0.15px;text-rendering:geometricPrecision;">Las Piñas</div>
<div class="a" style="left:1294px;top:659px;width:48px;height:17px;overflow:hidden">
<div class="t" style="left:20.5px;top:1.90px;font-size:9.8px;line-height:16px;letter-spacing:0.67px;color:#111;text-rendering:geometricPrecision">10220</div></div>
<div class="a" style="left:0px;top:678px;width:1364px;height:29px;background:#e6e6e6;"></div>
<div class="a" style="left:0px;top:678px;width:1342px;height:1px;background:#b9b9b9;"></div>
<div class="a" style="left:0px;top:705px;width:1364px;height:1px;background:#c8c8c8;"></div>
<div class="a" style="left:0px;top:706px;width:1364px;height:1px;background:#f0f0f0;"></div>
<svg class="a" style="left:24.5px;top:688px;" width="5" height="8" viewBox="0 0 5 8"><path d="M5 0V8L0 4Z" fill="#217346"/></svg>
<svg class="a" style="left:54px;top:688px;" width="5" height="8" viewBox="0 0 5 8"><path d="M0 0V8L5 4Z" fill="#bdbdbd"/></svg>
<div class="t" style="left:78.5px;top:683.50px;font-size:13px;line-height:16px;color:#217346;font-weight:bold;letter-spacing:0.4px;">...</div>
<div class="a" style="left:98px;top:678px;width:82px;height:25px;background:#fff;box-sizing:border-box;border-right:1px solid #b0b0b0;border-left:1px solid #b0b0b0;"></div>
<div class="a" style="left:98px;top:701px;width:82px;height:2px;background:#217346;"></div>
<div class="t" style="left:110.4px;top:683.50px;font-size:13px;line-height:16px;color:#217346;font-weight:bold;letter-spacing:-0.146px;">Raw Data</div>
<svg class="a" style="left:213px;top:684px;" width="16" height="16" viewBox="0 0 16 16"><circle cx="8" cy="8" r="7.3" fill="none" stroke="#777" stroke-width="1.1"/><path d="M4.5 8H11.5M8 4.5V11.5" stroke="#666" stroke-width="1.4"/></svg>
<div class="a" style="left:817px;top:688px;width:2px;height:2px;background:#b4b4b4;"></div>
<div class="a" style="left:817px;top:692px;width:2px;height:2px;background:#b4b4b4;"></div>
<div class="a" style="left:817px;top:696px;width:2px;height:2px;background:#b4b4b4;"></div>
<div class="a" style="left:849px;top:685px;width:479px;height:15px;background:#dadada;"></div>
<div class="a" style="left:834px;top:685px;width:15px;height:15px;background:#fff;box-sizing:border-box;border:1px solid #ababab;"></div>
<svg class="a" style="left:839px;top:689px;" width="5" height="7" viewBox="0 0 5 7"><path d="M5 0V7L0 3.5Z" fill="#606060"/></svg>
<div class="a" style="left:848px;top:685px;width:95px;height:15px;background:#fff;box-sizing:border-box;border:1px solid #ababab;"></div>
<div class="a" style="left:1328px;top:685px;width:15px;height:15px;background:#fff;box-sizing:border-box;border:1px solid #ababab;"></div>
<svg class="a" style="left:1334px;top:689px;" width="5" height="7" viewBox="0 0 5 7"><path d="M0 0V7L5 3.5Z" fill="#606060"/></svg>
<div class="a" style="left:1346px;top:198px;width:15px;height:480px;background:#dadada;"></div>
<div class="a" style="left:1346px;top:198px;width:15px;height:15px;background:#fff;box-sizing:border-box;border:1px solid #ababab;"></div>
<svg class="a" style="left:1350px;top:203px;" width="7" height="4" viewBox="0 0 7 4"><path d="M0 4H7L3.5 0Z" fill="#606060"/></svg>
<div class="a" style="left:1346px;top:212px;width:15px;height:31px;background:#fff;box-sizing:border-box;border:1px solid #ababab;"></div>
<div class="a" style="left:1346px;top:665px;width:15px;height:13px;background:#fff;box-sizing:border-box;border:1px solid #ababab;"></div>
<svg class="a" style="left:1350px;top:670px;" width="7" height="4" viewBox="0 0 7 4"><path d="M0 0H7L3.5 4Z" fill="#606060"/></svg>
</body></html>
